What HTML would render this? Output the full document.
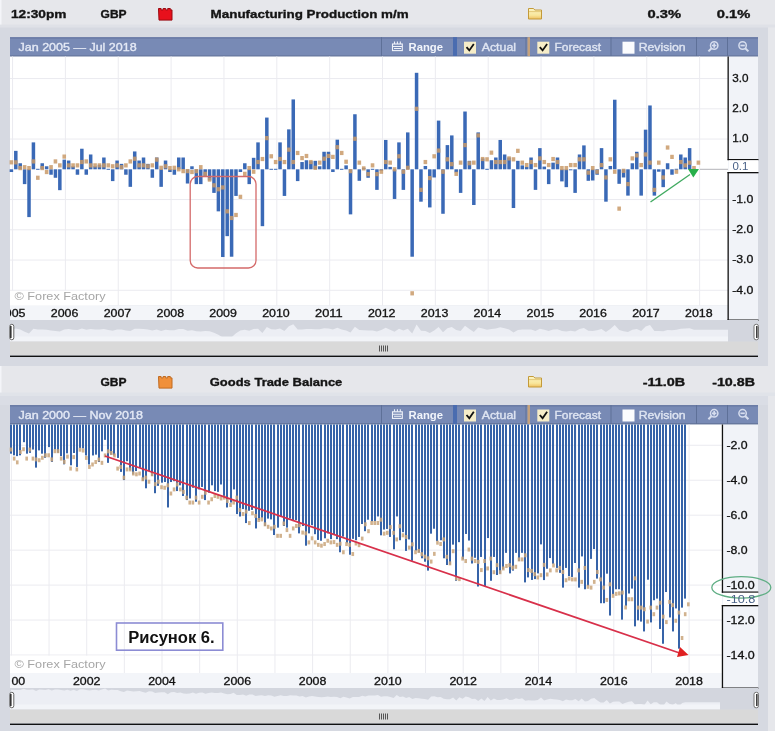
<!DOCTYPE html>
<html><head><meta charset="utf-8"><style>html,body{margin:0;padding:0;background:#e6e7eb;overflow:hidden}svg{display:block}#t{position:absolute;left:0;top:0;will-change:transform}</style></head>
<body><svg width="775" height="731" viewBox="0 0 775 731">
<defs><linearGradient id="fold" x1="0" y1="0" x2="0" y2="1"><stop offset="0" stop-color="#fdf6c8"/><stop offset="0.65" stop-color="#f8e69a"/><stop offset="1" stop-color="#f0c060"/></linearGradient></defs>
<rect x="0" y="0" width="775" height="731" fill="#e6e7eb"/>
<rect x="0" y="25.5" width="768" height="340.5" fill="#d6d9e1"/>
<rect x="0" y="393" width="768" height="338" fill="#d6d9e1"/>
<rect x="0" y="392.5" width="775" height="3.5" fill="#e0e3e9"/>
<rect x="0" y="396" width="768" height="9" fill="#dadde5"/>
<rect x="0" y="24.5" width="775" height="3" fill="#dfe1e7"/>
<rect x="0" y="0" width="1.5" height="24.5" fill="#f4f5f9"/>
<rect x="0" y="366" width="1.5" height="26.5" fill="#f4f5f9"/>
<path d="M158.5 8.5 h2.6 v1.4 h2 v-1.4 h2.6 v1.4 h2 v-1.4 h2.6 v1.4 h1.7 v10.2 h-13 z" fill="#e8101c" stroke="#9a0a10" stroke-width="1"/>
<path d="M528.5 19 V8.5 H533.5 L534.8 10 H541.5 V19 Z" fill="url(#fold)" stroke="#c39a3a" stroke-width="1"/>
<rect x="529" y="11.2" width="12" height="0.9" fill="#d9bc62" opacity="0.8"/>
<path d="M158.5 376.5 h2.6 v1.4 h2 v-1.4 h2.6 v1.4 h2 v-1.4 h2.6 v1.4 h1.7 v10.2 h-13 z" fill="#f0903a" stroke="#c06a20" stroke-width="1"/>
<path d="M528.5 387 V376.5 H533.5 L534.8 378 H541.5 V387 Z" fill="url(#fold)" stroke="#c39a3a" stroke-width="1"/>
<rect x="529" y="379.2" width="12" height="0.9" fill="#d9bc62" opacity="0.8"/>
<rect x="10" y="37.2" width="748" height="19.6" fill="#788ab5"/>
<rect x="10" y="37.2" width="748" height="1.6" fill="#6b7ca6"/>
<rect x="10" y="55.5" width="748" height="1.3" fill="#5f6f94"/>
<rect x="381.0" y="37.2" width="1" height="19" fill="#5e7098"/>
<rect x="610.5" y="37.2" width="1" height="19" fill="#5e7098"/>
<rect x="696.0" y="37.2" width="1" height="19" fill="#5e7098"/>
<rect x="727.0" y="37.2" width="1" height="19" fill="#5e7098"/>
<rect x="453" y="37.2" width="4" height="19" fill="#4a6cb0"/>
<rect x="525.5" y="37.2" width="1" height="19" fill="#5e7098"/>
<rect x="527.5" y="37.2" width="2.5" height="19" fill="#c4a27e"/>
<g stroke="#f0f3fa" stroke-width="1.1" fill="none"><rect x="392.5" y="44.0" width="9.8" height="6.6"/><path d="M392.5 46.5 h9.8 M394.5 41.400000000000006 v2.5 M397.4 41.400000000000006 v2.5 M400.3 41.400000000000006 v2.5 M394 48.5 h7"/></g>
<rect x="464" y="41.7" width="12" height="12" fill="#f6edc8"/>
<path d="M466.5 47.2 l2.8 3.2 l4.5 -6.5" stroke="#111" stroke-width="1.8" fill="none"/>
<rect x="537.3" y="41.7" width="12" height="12" fill="#f6edc8"/>
<path d="M539.8 47.2 l2.8 3.2 l4.5 -6.5" stroke="#111" stroke-width="1.8" fill="none"/>
<rect x="622.5" y="41.7" width="12" height="12" fill="#fbfcfe"/>
<g stroke="#d6ddee" stroke-width="1.5" fill="none"><circle cx="714.2" cy="45.5" r="3.7"/><path d="M711.6 48.2 l-3.2 3.2" stroke-width="2"/><path d="M712 45.5 h4.4 M714.2 43.300000000000004 v4.4" stroke-width="1.7"/></g>
<g stroke="#d6ddee" stroke-width="1.5" fill="none"><circle cx="742.6" cy="45.5" r="3.7"/><path d="M745.2 48.2 l3.2 3.2" stroke-width="2"/><path d="M740.4 45.5 h4.4" stroke-width="1.7"/></g>
<rect x="10" y="405" width="748" height="19.6" fill="#788ab5"/>
<rect x="10" y="405" width="748" height="1.6" fill="#6b7ca6"/>
<rect x="10" y="423.3" width="748" height="1.3" fill="#5f6f94"/>
<rect x="381.0" y="405" width="1" height="19" fill="#5e7098"/>
<rect x="610.5" y="405" width="1" height="19" fill="#5e7098"/>
<rect x="696.0" y="405" width="1" height="19" fill="#5e7098"/>
<rect x="727.0" y="405" width="1" height="19" fill="#5e7098"/>
<rect x="453" y="405" width="4" height="19" fill="#4a6cb0"/>
<rect x="525.5" y="405" width="1" height="19" fill="#5e7098"/>
<rect x="527.5" y="405" width="2.5" height="19" fill="#c4a27e"/>
<g stroke="#f0f3fa" stroke-width="1.1" fill="none"><rect x="392.5" y="411.8" width="9.8" height="6.6"/><path d="M392.5 414.3 h9.8 M394.5 409.2 v2.5 M397.4 409.2 v2.5 M400.3 409.2 v2.5 M394 416.3 h7"/></g>
<rect x="464" y="409.5" width="12" height="12" fill="#f6edc8"/>
<path d="M466.5 415 l2.8 3.2 l4.5 -6.5" stroke="#111" stroke-width="1.8" fill="none"/>
<rect x="537.3" y="409.5" width="12" height="12" fill="#f6edc8"/>
<path d="M539.8 415 l2.8 3.2 l4.5 -6.5" stroke="#111" stroke-width="1.8" fill="none"/>
<rect x="622.5" y="409.5" width="12" height="12" fill="#fbfcfe"/>
<g stroke="#d6ddee" stroke-width="1.5" fill="none"><circle cx="714.2" cy="413.3" r="3.7"/><path d="M711.6 416 l-3.2 3.2" stroke-width="2"/><path d="M712 413.3 h4.4 M714.2 411.1 v4.4" stroke-width="1.7"/></g>
<g stroke="#d6ddee" stroke-width="1.5" fill="none"><circle cx="742.6" cy="413.3" r="3.7"/><path d="M745.2 416 l3.2 3.2" stroke-width="2"/><path d="M740.4 413.3 h4.4" stroke-width="1.7"/></g>
<rect x="10" y="56.5" width="718" height="249.0" fill="#ffffff"/>
<rect x="10" y="305.5" width="718" height="14.5" fill="#f3f5f9"/>
<rect x="728" y="56.5" width="30" height="263.5" fill="#f1f3f8"/>
<rect x="10" y="78.05000000000001" width="718" height="1" fill="#ebebf0"/>
<rect x="10" y="108.30000000000001" width="718" height="1" fill="#ebebf0"/>
<rect x="10" y="138.55" width="718" height="1" fill="#ebebf0"/>
<rect x="10" y="199.05" width="718" height="1" fill="#ebebf0"/>
<rect x="10" y="229.3" width="718" height="1" fill="#ebebf0"/>
<rect x="10" y="259.55" width="718" height="1" fill="#ebebf0"/>
<rect x="10" y="289.8" width="718" height="1" fill="#ebebf0"/>
<rect x="12.05" y="56.5" width="1" height="249.0" fill="#ebebf0"/>
<rect x="64.9" y="56.5" width="1" height="249.0" fill="#ebebf0"/>
<rect x="117.75" y="56.5" width="1" height="249.0" fill="#ebebf0"/>
<rect x="170.60000000000002" y="56.5" width="1" height="249.0" fill="#ebebf0"/>
<rect x="223.45000000000002" y="56.5" width="1" height="249.0" fill="#ebebf0"/>
<rect x="276.3" y="56.5" width="1" height="249.0" fill="#ebebf0"/>
<rect x="329.15000000000003" y="56.5" width="1" height="249.0" fill="#ebebf0"/>
<rect x="382.0" y="56.5" width="1" height="249.0" fill="#ebebf0"/>
<rect x="434.85" y="56.5" width="1" height="249.0" fill="#ebebf0"/>
<rect x="487.70000000000005" y="56.5" width="1" height="249.0" fill="#ebebf0"/>
<rect x="540.55" y="56.5" width="1" height="249.0" fill="#ebebf0"/>
<rect x="593.4" y="56.5" width="1" height="249.0" fill="#ebebf0"/>
<rect x="646.25" y="56.5" width="1" height="249.0" fill="#ebebf0"/>
<rect x="699.1" y="56.5" width="1" height="249.0" fill="#ebebf0"/>
<rect x="10" y="290.8" width="98" height="14.7" fill="#ffffff"/>
<rect x="700" y="168.8" width="28" height="1" fill="#b4b4b8"/>
<rect x="9.65" y="169.30" width="3.5" height="2.72" fill="#3a69b6"/>
<rect x="9.60" y="160.24" width="3.6" height="4.2" fill="#c99a68" opacity="0.85"/>
<rect x="14.05" y="150.85" width="3.5" height="18.45" fill="#3a69b6"/>
<rect x="14.00" y="160.24" width="3.6" height="4.2" fill="#c99a68" opacity="0.85"/>
<rect x="18.46" y="163.25" width="3.5" height="6.05" fill="#3a69b6"/>
<rect x="18.41" y="165.99" width="3.6" height="4.2" fill="#c99a68" opacity="0.85"/>
<rect x="22.86" y="169.30" width="3.5" height="14.82" fill="#3a69b6"/>
<rect x="22.81" y="165.08" width="3.6" height="4.2" fill="#c99a68" opacity="0.85"/>
<rect x="27.27" y="169.30" width="3.5" height="47.80" fill="#3a69b6"/>
<rect x="27.22" y="165.99" width="3.6" height="4.2" fill="#c99a68" opacity="0.85"/>
<rect x="31.67" y="142.38" width="3.5" height="26.92" fill="#3a69b6"/>
<rect x="31.62" y="159.34" width="3.6" height="4.2" fill="#c99a68" opacity="0.85"/>
<rect x="36.07" y="168.80" width="3.5" height="1" fill="#3a69b6"/>
<rect x="36.02" y="175.67" width="3.6" height="4.2" fill="#c99a68" opacity="0.85"/>
<rect x="40.48" y="163.25" width="3.5" height="6.05" fill="#3a69b6"/>
<rect x="40.43" y="165.99" width="3.6" height="4.2" fill="#c99a68" opacity="0.85"/>
<rect x="44.88" y="166.28" width="3.5" height="3.03" fill="#3a69b6"/>
<rect x="44.83" y="169.92" width="3.6" height="4.2" fill="#c99a68" opacity="0.85"/>
<rect x="49.29" y="169.30" width="3.5" height="5.44" fill="#3a69b6"/>
<rect x="49.24" y="165.08" width="3.6" height="4.2" fill="#c99a68" opacity="0.85"/>
<rect x="53.69" y="169.30" width="3.5" height="8.47" fill="#3a69b6"/>
<rect x="53.64" y="159.34" width="3.6" height="4.2" fill="#c99a68" opacity="0.85"/>
<rect x="58.09" y="169.30" width="3.5" height="20.87" fill="#3a69b6"/>
<rect x="58.04" y="163.27" width="3.6" height="4.2" fill="#c99a68" opacity="0.85"/>
<rect x="62.50" y="159.62" width="3.5" height="9.68" fill="#3a69b6"/>
<rect x="62.45" y="154.50" width="3.6" height="4.2" fill="#c99a68" opacity="0.85"/>
<rect x="66.90" y="160.53" width="3.5" height="8.77" fill="#3a69b6"/>
<rect x="66.85" y="163.27" width="3.6" height="4.2" fill="#c99a68" opacity="0.85"/>
<rect x="71.31" y="166.28" width="3.5" height="3.03" fill="#3a69b6"/>
<rect x="71.26" y="163.27" width="3.6" height="4.2" fill="#c99a68" opacity="0.85"/>
<rect x="75.71" y="169.30" width="3.5" height="5.44" fill="#3a69b6"/>
<rect x="75.66" y="163.27" width="3.6" height="4.2" fill="#c99a68" opacity="0.85"/>
<rect x="80.11" y="148.73" width="3.5" height="20.57" fill="#3a69b6"/>
<rect x="80.06" y="159.94" width="3.6" height="4.2" fill="#c99a68" opacity="0.85"/>
<rect x="84.52" y="169.30" width="3.5" height="5.44" fill="#3a69b6"/>
<rect x="84.47" y="159.34" width="3.6" height="4.2" fill="#c99a68" opacity="0.85"/>
<rect x="88.92" y="154.48" width="3.5" height="14.82" fill="#3a69b6"/>
<rect x="88.87" y="163.27" width="3.6" height="4.2" fill="#c99a68" opacity="0.85"/>
<rect x="93.33" y="166.28" width="3.5" height="3.03" fill="#3a69b6"/>
<rect x="93.28" y="163.27" width="3.6" height="4.2" fill="#c99a68" opacity="0.85"/>
<rect x="97.73" y="164.76" width="3.5" height="4.54" fill="#3a69b6"/>
<rect x="97.68" y="163.27" width="3.6" height="4.2" fill="#c99a68" opacity="0.85"/>
<rect x="102.13" y="157.50" width="3.5" height="11.80" fill="#3a69b6"/>
<rect x="102.08" y="163.27" width="3.6" height="4.2" fill="#c99a68" opacity="0.85"/>
<rect x="106.54" y="168.80" width="3.5" height="1" fill="#3a69b6"/>
<rect x="106.49" y="163.27" width="3.6" height="4.2" fill="#c99a68" opacity="0.85"/>
<rect x="110.94" y="169.30" width="3.5" height="11.80" fill="#3a69b6"/>
<rect x="110.89" y="164.18" width="3.6" height="4.2" fill="#c99a68" opacity="0.85"/>
<rect x="115.35" y="160.53" width="3.5" height="8.77" fill="#3a69b6"/>
<rect x="115.30" y="163.27" width="3.6" height="4.2" fill="#c99a68" opacity="0.85"/>
<rect x="119.75" y="163.86" width="3.5" height="5.44" fill="#3a69b6"/>
<rect x="119.70" y="165.08" width="3.6" height="4.2" fill="#c99a68" opacity="0.85"/>
<rect x="124.15" y="169.30" width="3.5" height="5.44" fill="#3a69b6"/>
<rect x="124.10" y="163.27" width="3.6" height="4.2" fill="#c99a68" opacity="0.85"/>
<rect x="128.56" y="169.30" width="3.5" height="17.54" fill="#3a69b6"/>
<rect x="128.51" y="159.34" width="3.6" height="4.2" fill="#c99a68" opacity="0.85"/>
<rect x="132.96" y="151.45" width="3.5" height="17.85" fill="#3a69b6"/>
<rect x="132.91" y="156.61" width="3.6" height="4.2" fill="#c99a68" opacity="0.85"/>
<rect x="137.37" y="160.53" width="3.5" height="8.77" fill="#3a69b6"/>
<rect x="137.32" y="163.27" width="3.6" height="4.2" fill="#c99a68" opacity="0.85"/>
<rect x="141.77" y="157.50" width="3.5" height="11.80" fill="#3a69b6"/>
<rect x="141.72" y="163.27" width="3.6" height="4.2" fill="#c99a68" opacity="0.85"/>
<rect x="146.17" y="163.86" width="3.5" height="5.44" fill="#3a69b6"/>
<rect x="146.12" y="164.18" width="3.6" height="4.2" fill="#c99a68" opacity="0.85"/>
<rect x="150.58" y="169.30" width="3.5" height="8.47" fill="#3a69b6"/>
<rect x="150.53" y="163.27" width="3.6" height="4.2" fill="#c99a68" opacity="0.85"/>
<rect x="154.98" y="157.50" width="3.5" height="11.80" fill="#3a69b6"/>
<rect x="154.93" y="157.52" width="3.6" height="4.2" fill="#c99a68" opacity="0.85"/>
<rect x="159.39" y="169.30" width="3.5" height="17.54" fill="#3a69b6"/>
<rect x="159.34" y="165.69" width="3.6" height="4.2" fill="#c99a68" opacity="0.85"/>
<rect x="163.79" y="160.53" width="3.5" height="8.77" fill="#3a69b6"/>
<rect x="163.74" y="164.18" width="3.6" height="4.2" fill="#c99a68" opacity="0.85"/>
<rect x="168.19" y="169.30" width="3.5" height="2.72" fill="#3a69b6"/>
<rect x="168.14" y="165.99" width="3.6" height="4.2" fill="#c99a68" opacity="0.85"/>
<rect x="172.60" y="169.30" width="3.5" height="5.44" fill="#3a69b6"/>
<rect x="172.55" y="165.69" width="3.6" height="4.2" fill="#c99a68" opacity="0.85"/>
<rect x="177.00" y="157.50" width="3.5" height="11.80" fill="#3a69b6"/>
<rect x="176.95" y="167.20" width="3.6" height="4.2" fill="#c99a68" opacity="0.85"/>
<rect x="181.41" y="157.50" width="3.5" height="11.80" fill="#3a69b6"/>
<rect x="181.36" y="169.02" width="3.6" height="4.2" fill="#c99a68" opacity="0.85"/>
<rect x="185.81" y="169.30" width="3.5" height="14.22" fill="#3a69b6"/>
<rect x="185.76" y="169.02" width="3.6" height="4.2" fill="#c99a68" opacity="0.85"/>
<rect x="190.21" y="166.28" width="3.5" height="3.03" fill="#3a69b6"/>
<rect x="190.16" y="169.92" width="3.6" height="4.2" fill="#c99a68" opacity="0.85"/>
<rect x="194.62" y="169.30" width="3.5" height="14.82" fill="#3a69b6"/>
<rect x="194.57" y="169.02" width="3.6" height="4.2" fill="#c99a68" opacity="0.85"/>
<rect x="199.02" y="169.30" width="3.5" height="14.82" fill="#3a69b6"/>
<rect x="198.97" y="165.08" width="3.6" height="4.2" fill="#c99a68" opacity="0.85"/>
<rect x="203.43" y="169.30" width="3.5" height="6.66" fill="#3a69b6"/>
<rect x="203.38" y="171.74" width="3.6" height="4.2" fill="#c99a68" opacity="0.85"/>
<rect x="207.83" y="169.30" width="3.5" height="11.19" fill="#3a69b6"/>
<rect x="207.78" y="177.49" width="3.6" height="4.2" fill="#c99a68" opacity="0.85"/>
<rect x="212.23" y="169.30" width="3.5" height="23.59" fill="#3a69b6"/>
<rect x="212.18" y="183.23" width="3.6" height="4.2" fill="#c99a68" opacity="0.85"/>
<rect x="216.64" y="169.30" width="3.5" height="42.05" fill="#3a69b6"/>
<rect x="216.59" y="187.17" width="3.6" height="4.2" fill="#c99a68" opacity="0.85"/>
<rect x="221.04" y="169.30" width="3.5" height="87.72" fill="#3a69b6"/>
<rect x="220.99" y="185.35" width="3.6" height="4.2" fill="#c99a68" opacity="0.85"/>
<rect x="225.45" y="169.30" width="3.5" height="66.85" fill="#3a69b6"/>
<rect x="225.40" y="209.25" width="3.6" height="4.2" fill="#c99a68" opacity="0.85"/>
<rect x="229.85" y="169.30" width="3.5" height="87.42" fill="#3a69b6"/>
<rect x="229.80" y="215.90" width="3.6" height="4.2" fill="#c99a68" opacity="0.85"/>
<rect x="234.25" y="169.30" width="3.5" height="26.62" fill="#3a69b6"/>
<rect x="234.20" y="212.88" width="3.6" height="4.2" fill="#c99a68" opacity="0.85"/>
<rect x="238.66" y="169.30" width="3.5" height="2.72" fill="#3a69b6"/>
<rect x="238.61" y="194.73" width="3.6" height="4.2" fill="#c99a68" opacity="0.85"/>
<rect x="243.06" y="163.25" width="3.5" height="6.05" fill="#3a69b6"/>
<rect x="243.01" y="171.74" width="3.6" height="4.2" fill="#c99a68" opacity="0.85"/>
<rect x="247.47" y="169.30" width="3.5" height="14.82" fill="#3a69b6"/>
<rect x="247.42" y="165.99" width="3.6" height="4.2" fill="#c99a68" opacity="0.85"/>
<rect x="251.87" y="157.81" width="3.5" height="11.50" fill="#3a69b6"/>
<rect x="251.82" y="169.62" width="3.6" height="4.2" fill="#c99a68" opacity="0.85"/>
<rect x="256.27" y="142.38" width="3.5" height="26.92" fill="#3a69b6"/>
<rect x="256.22" y="159.94" width="3.6" height="4.2" fill="#c99a68" opacity="0.85"/>
<rect x="260.68" y="169.30" width="3.5" height="56.87" fill="#3a69b6"/>
<rect x="260.63" y="156.92" width="3.6" height="4.2" fill="#c99a68" opacity="0.85"/>
<rect x="265.08" y="117.57" width="3.5" height="51.73" fill="#3a69b6"/>
<rect x="265.03" y="136.04" width="3.6" height="4.2" fill="#c99a68" opacity="0.85"/>
<rect x="269.49" y="168.80" width="3.5" height="1" fill="#3a69b6"/>
<rect x="269.44" y="154.19" width="3.6" height="4.2" fill="#c99a68" opacity="0.85"/>
<rect x="273.89" y="168.80" width="3.5" height="1" fill="#3a69b6"/>
<rect x="273.84" y="159.94" width="3.6" height="4.2" fill="#c99a68" opacity="0.85"/>
<rect x="278.29" y="142.38" width="3.5" height="26.92" fill="#3a69b6"/>
<rect x="278.24" y="156.92" width="3.6" height="4.2" fill="#c99a68" opacity="0.85"/>
<rect x="282.70" y="169.30" width="3.5" height="26.62" fill="#3a69b6"/>
<rect x="282.65" y="159.94" width="3.6" height="4.2" fill="#c99a68" opacity="0.85"/>
<rect x="287.10" y="129.37" width="3.5" height="39.93" fill="#3a69b6"/>
<rect x="287.05" y="147.54" width="3.6" height="4.2" fill="#c99a68" opacity="0.85"/>
<rect x="291.51" y="99.42" width="3.5" height="69.88" fill="#3a69b6"/>
<rect x="291.46" y="159.94" width="3.6" height="4.2" fill="#c99a68" opacity="0.85"/>
<rect x="295.91" y="169.30" width="3.5" height="11.80" fill="#3a69b6"/>
<rect x="295.86" y="150.87" width="3.6" height="4.2" fill="#c99a68" opacity="0.85"/>
<rect x="300.31" y="162.04" width="3.5" height="7.26" fill="#3a69b6"/>
<rect x="300.26" y="156.01" width="3.6" height="4.2" fill="#c99a68" opacity="0.85"/>
<rect x="304.72" y="160.23" width="3.5" height="9.07" fill="#3a69b6"/>
<rect x="304.67" y="153.89" width="3.6" height="4.2" fill="#c99a68" opacity="0.85"/>
<rect x="309.12" y="161.13" width="3.5" height="8.17" fill="#3a69b6"/>
<rect x="309.07" y="159.94" width="3.6" height="4.2" fill="#c99a68" opacity="0.85"/>
<rect x="313.53" y="160.83" width="3.5" height="8.47" fill="#3a69b6"/>
<rect x="313.48" y="165.69" width="3.6" height="4.2" fill="#c99a68" opacity="0.85"/>
<rect x="317.93" y="166.28" width="3.5" height="3.03" fill="#3a69b6"/>
<rect x="317.88" y="160.55" width="3.6" height="4.2" fill="#c99a68" opacity="0.85"/>
<rect x="322.33" y="151.76" width="3.5" height="17.54" fill="#3a69b6"/>
<rect x="322.28" y="156.61" width="3.6" height="4.2" fill="#c99a68" opacity="0.85"/>
<rect x="326.74" y="151.76" width="3.5" height="17.54" fill="#3a69b6"/>
<rect x="326.69" y="153.89" width="3.6" height="4.2" fill="#c99a68" opacity="0.85"/>
<rect x="331.14" y="169.30" width="3.5" height="2.72" fill="#3a69b6"/>
<rect x="331.09" y="154.80" width="3.6" height="4.2" fill="#c99a68" opacity="0.85"/>
<rect x="335.55" y="139.66" width="3.5" height="29.65" fill="#3a69b6"/>
<rect x="335.50" y="145.12" width="3.6" height="4.2" fill="#c99a68" opacity="0.85"/>
<rect x="339.95" y="168.80" width="3.5" height="1" fill="#3a69b6"/>
<rect x="339.90" y="150.87" width="3.6" height="4.2" fill="#c99a68" opacity="0.85"/>
<rect x="344.35" y="165.37" width="3.5" height="3.93" fill="#3a69b6"/>
<rect x="344.30" y="159.64" width="3.6" height="4.2" fill="#c99a68" opacity="0.85"/>
<rect x="348.76" y="169.30" width="3.5" height="45.07" fill="#3a69b6"/>
<rect x="348.71" y="169.02" width="3.6" height="4.2" fill="#c99a68" opacity="0.85"/>
<rect x="353.16" y="114.25" width="3.5" height="55.06" fill="#3a69b6"/>
<rect x="353.11" y="136.65" width="3.6" height="4.2" fill="#c99a68" opacity="0.85"/>
<rect x="357.57" y="169.30" width="3.5" height="11.50" fill="#3a69b6"/>
<rect x="357.52" y="160.55" width="3.6" height="4.2" fill="#c99a68" opacity="0.85"/>
<rect x="361.97" y="167.79" width="3.5" height="1.51" fill="#3a69b6"/>
<rect x="361.92" y="166.29" width="3.6" height="4.2" fill="#c99a68" opacity="0.85"/>
<rect x="366.37" y="169.30" width="3.5" height="8.47" fill="#3a69b6"/>
<rect x="366.32" y="172.04" width="3.6" height="4.2" fill="#c99a68" opacity="0.85"/>
<rect x="370.78" y="168.80" width="3.5" height="1" fill="#3a69b6"/>
<rect x="370.73" y="163.27" width="3.6" height="4.2" fill="#c99a68" opacity="0.85"/>
<rect x="375.18" y="169.30" width="3.5" height="20.57" fill="#3a69b6"/>
<rect x="375.13" y="172.04" width="3.6" height="4.2" fill="#c99a68" opacity="0.85"/>
<rect x="379.59" y="169.30" width="3.5" height="1.51" fill="#3a69b6"/>
<rect x="379.54" y="169.62" width="3.6" height="4.2" fill="#c99a68" opacity="0.85"/>
<rect x="383.99" y="139.96" width="3.5" height="29.34" fill="#3a69b6"/>
<rect x="383.94" y="159.94" width="3.6" height="4.2" fill="#c99a68" opacity="0.85"/>
<rect x="388.39" y="166.88" width="3.5" height="2.42" fill="#3a69b6"/>
<rect x="388.34" y="160.55" width="3.6" height="4.2" fill="#c99a68" opacity="0.85"/>
<rect x="392.80" y="169.30" width="3.5" height="29.65" fill="#3a69b6"/>
<rect x="392.75" y="167.20" width="3.6" height="4.2" fill="#c99a68" opacity="0.85"/>
<rect x="397.20" y="142.38" width="3.5" height="26.92" fill="#3a69b6"/>
<rect x="397.15" y="154.19" width="3.6" height="4.2" fill="#c99a68" opacity="0.85"/>
<rect x="401.61" y="169.30" width="3.5" height="20.57" fill="#3a69b6"/>
<rect x="401.56" y="169.62" width="3.6" height="4.2" fill="#c99a68" opacity="0.85"/>
<rect x="406.01" y="132.40" width="3.5" height="36.91" fill="#3a69b6"/>
<rect x="405.96" y="165.69" width="3.6" height="4.2" fill="#c99a68" opacity="0.85"/>
<rect x="410.41" y="169.30" width="3.5" height="87.42" fill="#3a69b6"/>
<rect x="410.36" y="291.22" width="3.6" height="4.2" fill="#c99a68" opacity="0.85"/>
<rect x="414.82" y="72.80" width="3.5" height="96.50" fill="#3a69b6"/>
<rect x="414.77" y="106.70" width="3.6" height="4.2" fill="#c99a68" opacity="0.85"/>
<rect x="419.22" y="169.30" width="3.5" height="32.37" fill="#3a69b6"/>
<rect x="419.17" y="187.77" width="3.6" height="4.2" fill="#c99a68" opacity="0.85"/>
<rect x="423.63" y="165.97" width="3.5" height="3.33" fill="#3a69b6"/>
<rect x="423.58" y="159.94" width="3.6" height="4.2" fill="#c99a68" opacity="0.85"/>
<rect x="428.03" y="169.30" width="3.5" height="38.12" fill="#3a69b6"/>
<rect x="427.98" y="175.97" width="3.6" height="4.2" fill="#c99a68" opacity="0.85"/>
<rect x="432.43" y="169.30" width="3.5" height="8.17" fill="#3a69b6"/>
<rect x="432.38" y="154.19" width="3.6" height="4.2" fill="#c99a68" opacity="0.85"/>
<rect x="436.84" y="120.60" width="3.5" height="48.70" fill="#3a69b6"/>
<rect x="436.79" y="148.45" width="3.6" height="4.2" fill="#c99a68" opacity="0.85"/>
<rect x="441.24" y="169.30" width="3.5" height="44.47" fill="#3a69b6"/>
<rect x="441.19" y="169.62" width="3.6" height="4.2" fill="#c99a68" opacity="0.85"/>
<rect x="445.65" y="145.10" width="3.5" height="24.20" fill="#3a69b6"/>
<rect x="445.60" y="157.22" width="3.6" height="4.2" fill="#c99a68" opacity="0.85"/>
<rect x="450.05" y="135.42" width="3.5" height="33.88" fill="#3a69b6"/>
<rect x="450.00" y="162.06" width="3.6" height="4.2" fill="#c99a68" opacity="0.85"/>
<rect x="454.45" y="169.30" width="3.5" height="3.03" fill="#3a69b6"/>
<rect x="454.40" y="171.74" width="3.6" height="4.2" fill="#c99a68" opacity="0.85"/>
<rect x="458.86" y="169.30" width="3.5" height="23.59" fill="#3a69b6"/>
<rect x="458.81" y="160.55" width="3.6" height="4.2" fill="#c99a68" opacity="0.85"/>
<rect x="463.26" y="111.52" width="3.5" height="57.78" fill="#3a69b6"/>
<rect x="463.21" y="143.00" width="3.6" height="4.2" fill="#c99a68" opacity="0.85"/>
<rect x="467.67" y="160.83" width="3.5" height="8.47" fill="#3a69b6"/>
<rect x="467.62" y="161.15" width="3.6" height="4.2" fill="#c99a68" opacity="0.85"/>
<rect x="472.07" y="169.30" width="3.5" height="35.69" fill="#3a69b6"/>
<rect x="472.02" y="160.55" width="3.6" height="4.2" fill="#c99a68" opacity="0.85"/>
<rect x="476.47" y="132.40" width="3.5" height="36.91" fill="#3a69b6"/>
<rect x="476.42" y="133.32" width="3.6" height="4.2" fill="#c99a68" opacity="0.85"/>
<rect x="480.88" y="158.41" width="3.5" height="10.89" fill="#3a69b6"/>
<rect x="480.83" y="156.92" width="3.6" height="4.2" fill="#c99a68" opacity="0.85"/>
<rect x="485.28" y="168.80" width="3.5" height="1" fill="#3a69b6"/>
<rect x="485.23" y="157.22" width="3.6" height="4.2" fill="#c99a68" opacity="0.85"/>
<rect x="489.69" y="160.23" width="3.5" height="9.07" fill="#3a69b6"/>
<rect x="489.64" y="150.56" width="3.6" height="4.2" fill="#c99a68" opacity="0.85"/>
<rect x="494.09" y="157.50" width="3.5" height="11.80" fill="#3a69b6"/>
<rect x="494.04" y="159.94" width="3.6" height="4.2" fill="#c99a68" opacity="0.85"/>
<rect x="498.49" y="139.96" width="3.5" height="29.34" fill="#3a69b6"/>
<rect x="498.44" y="159.94" width="3.6" height="4.2" fill="#c99a68" opacity="0.85"/>
<rect x="502.90" y="154.48" width="3.5" height="14.82" fill="#3a69b6"/>
<rect x="502.85" y="159.94" width="3.6" height="4.2" fill="#c99a68" opacity="0.85"/>
<rect x="507.30" y="157.50" width="3.5" height="11.80" fill="#3a69b6"/>
<rect x="507.25" y="156.31" width="3.6" height="4.2" fill="#c99a68" opacity="0.85"/>
<rect x="511.71" y="169.30" width="3.5" height="38.72" fill="#3a69b6"/>
<rect x="511.66" y="157.22" width="3.6" height="4.2" fill="#c99a68" opacity="0.85"/>
<rect x="516.11" y="160.83" width="3.5" height="8.47" fill="#3a69b6"/>
<rect x="516.06" y="148.75" width="3.6" height="4.2" fill="#c99a68" opacity="0.85"/>
<rect x="520.51" y="165.37" width="3.5" height="3.93" fill="#3a69b6"/>
<rect x="520.46" y="160.55" width="3.6" height="4.2" fill="#c99a68" opacity="0.85"/>
<rect x="524.92" y="166.88" width="3.5" height="2.42" fill="#3a69b6"/>
<rect x="524.87" y="162.97" width="3.6" height="4.2" fill="#c99a68" opacity="0.85"/>
<rect x="529.32" y="157.50" width="3.5" height="11.80" fill="#3a69b6"/>
<rect x="529.27" y="159.94" width="3.6" height="4.2" fill="#c99a68" opacity="0.85"/>
<rect x="533.73" y="169.30" width="3.5" height="20.57" fill="#3a69b6"/>
<rect x="533.68" y="162.97" width="3.6" height="4.2" fill="#c99a68" opacity="0.85"/>
<rect x="538.13" y="148.12" width="3.5" height="21.18" fill="#3a69b6"/>
<rect x="538.08" y="156.31" width="3.6" height="4.2" fill="#c99a68" opacity="0.85"/>
<rect x="542.53" y="166.58" width="3.5" height="2.72" fill="#3a69b6"/>
<rect x="542.48" y="159.94" width="3.6" height="4.2" fill="#c99a68" opacity="0.85"/>
<rect x="546.94" y="169.30" width="3.5" height="14.82" fill="#3a69b6"/>
<rect x="546.89" y="162.97" width="3.6" height="4.2" fill="#c99a68" opacity="0.85"/>
<rect x="551.34" y="162.65" width="3.5" height="6.66" fill="#3a69b6"/>
<rect x="551.29" y="156.92" width="3.6" height="4.2" fill="#c99a68" opacity="0.85"/>
<rect x="555.75" y="157.50" width="3.5" height="11.80" fill="#3a69b6"/>
<rect x="555.70" y="159.94" width="3.6" height="4.2" fill="#c99a68" opacity="0.85"/>
<rect x="560.15" y="169.30" width="3.5" height="12.10" fill="#3a69b6"/>
<rect x="560.10" y="165.99" width="3.6" height="4.2" fill="#c99a68" opacity="0.85"/>
<rect x="564.55" y="169.30" width="3.5" height="17.85" fill="#3a69b6"/>
<rect x="564.50" y="165.99" width="3.6" height="4.2" fill="#c99a68" opacity="0.85"/>
<rect x="568.96" y="169.30" width="3.5" height="1.00" fill="#3a69b6"/>
<rect x="568.91" y="162.97" width="3.6" height="4.2" fill="#c99a68" opacity="0.85"/>
<rect x="573.36" y="169.30" width="3.5" height="23.59" fill="#3a69b6"/>
<rect x="573.31" y="162.97" width="3.6" height="4.2" fill="#c99a68" opacity="0.85"/>
<rect x="577.77" y="154.48" width="3.5" height="14.82" fill="#3a69b6"/>
<rect x="577.72" y="157.22" width="3.6" height="4.2" fill="#c99a68" opacity="0.85"/>
<rect x="582.17" y="145.40" width="3.5" height="23.90" fill="#3a69b6"/>
<rect x="582.12" y="157.22" width="3.6" height="4.2" fill="#c99a68" opacity="0.85"/>
<rect x="586.57" y="169.30" width="3.5" height="11.50" fill="#3a69b6"/>
<rect x="586.52" y="170.53" width="3.6" height="4.2" fill="#c99a68" opacity="0.85"/>
<rect x="590.98" y="169.30" width="3.5" height="11.19" fill="#3a69b6"/>
<rect x="590.93" y="165.99" width="3.6" height="4.2" fill="#c99a68" opacity="0.85"/>
<rect x="595.38" y="169.30" width="3.5" height="5.44" fill="#3a69b6"/>
<rect x="595.33" y="169.62" width="3.6" height="4.2" fill="#c99a68" opacity="0.85"/>
<rect x="599.79" y="148.12" width="3.5" height="21.18" fill="#3a69b6"/>
<rect x="599.74" y="162.97" width="3.6" height="4.2" fill="#c99a68" opacity="0.85"/>
<rect x="604.19" y="169.30" width="3.5" height="32.37" fill="#3a69b6"/>
<rect x="604.14" y="175.37" width="3.6" height="4.2" fill="#c99a68" opacity="0.85"/>
<rect x="608.59" y="165.97" width="3.5" height="3.33" fill="#3a69b6"/>
<rect x="608.54" y="157.22" width="3.6" height="4.2" fill="#c99a68" opacity="0.85"/>
<rect x="613.00" y="99.73" width="3.5" height="69.57" fill="#3a69b6"/>
<rect x="612.95" y="169.62" width="3.6" height="4.2" fill="#c99a68" opacity="0.85"/>
<rect x="617.40" y="169.30" width="3.5" height="14.52" fill="#3a69b6"/>
<rect x="617.35" y="206.53" width="3.6" height="4.2" fill="#c99a68" opacity="0.85"/>
<rect x="621.81" y="169.30" width="3.5" height="8.17" fill="#3a69b6"/>
<rect x="621.76" y="168.71" width="3.6" height="4.2" fill="#c99a68" opacity="0.85"/>
<rect x="626.21" y="169.30" width="3.5" height="26.32" fill="#3a69b6"/>
<rect x="626.16" y="182.02" width="3.6" height="4.2" fill="#c99a68" opacity="0.85"/>
<rect x="630.61" y="163.25" width="3.5" height="6.05" fill="#3a69b6"/>
<rect x="630.56" y="156.31" width="3.6" height="4.2" fill="#c99a68" opacity="0.85"/>
<rect x="635.02" y="151.76" width="3.5" height="17.54" fill="#3a69b6"/>
<rect x="634.97" y="153.29" width="3.6" height="4.2" fill="#c99a68" opacity="0.85"/>
<rect x="639.42" y="169.30" width="3.5" height="26.32" fill="#3a69b6"/>
<rect x="639.37" y="162.97" width="3.6" height="4.2" fill="#c99a68" opacity="0.85"/>
<rect x="643.83" y="129.67" width="3.5" height="39.63" fill="#3a69b6"/>
<rect x="643.78" y="152.38" width="3.6" height="4.2" fill="#c99a68" opacity="0.85"/>
<rect x="648.23" y="105.47" width="3.5" height="63.83" fill="#3a69b6"/>
<rect x="648.18" y="160.55" width="3.6" height="4.2" fill="#c99a68" opacity="0.85"/>
<rect x="652.63" y="169.30" width="3.5" height="26.32" fill="#3a69b6"/>
<rect x="652.58" y="187.77" width="3.6" height="4.2" fill="#c99a68" opacity="0.85"/>
<rect x="657.04" y="169.30" width="3.5" height="2.42" fill="#3a69b6"/>
<rect x="656.99" y="160.55" width="3.6" height="4.2" fill="#c99a68" opacity="0.85"/>
<rect x="661.44" y="169.30" width="3.5" height="17.85" fill="#3a69b6"/>
<rect x="661.39" y="175.37" width="3.6" height="4.2" fill="#c99a68" opacity="0.85"/>
<rect x="665.85" y="163.25" width="3.5" height="6.05" fill="#3a69b6"/>
<rect x="665.80" y="145.42" width="3.6" height="4.2" fill="#c99a68" opacity="0.85"/>
<rect x="670.25" y="169.30" width="3.5" height="5.44" fill="#3a69b6"/>
<rect x="670.20" y="154.80" width="3.6" height="4.2" fill="#c99a68" opacity="0.85"/>
<rect x="674.65" y="168.80" width="3.5" height="1" fill="#3a69b6"/>
<rect x="674.60" y="169.62" width="3.6" height="4.2" fill="#c99a68" opacity="0.85"/>
<rect x="679.06" y="154.48" width="3.5" height="14.82" fill="#3a69b6"/>
<rect x="679.01" y="159.94" width="3.6" height="4.2" fill="#c99a68" opacity="0.85"/>
<rect x="683.46" y="157.50" width="3.5" height="11.80" fill="#3a69b6"/>
<rect x="683.41" y="163.27" width="3.6" height="4.2" fill="#c99a68" opacity="0.85"/>
<rect x="687.87" y="148.12" width="3.5" height="21.18" fill="#3a69b6"/>
<rect x="687.82" y="160.55" width="3.6" height="4.2" fill="#c99a68" opacity="0.85"/>
<rect x="692.27" y="168.80" width="3.5" height="1" fill="#3a69b6"/>
<rect x="692.22" y="165.99" width="3.6" height="4.2" fill="#c99a68" opacity="0.85"/>
<rect x="696.62" y="160.55" width="3.6" height="4.2" fill="#c99a68" opacity="0.85"/>
<rect x="727.5" y="56.5" width="1.3" height="103" fill="#111"/>
<rect x="727.5" y="172" width="1.3" height="148.5" fill="#111"/>
<rect x="727.5" y="159" width="31" height="1.3" fill="#111"/>
<rect x="727.5" y="172" width="31" height="1.3" fill="#111"/>
<rect x="728.8" y="160.3" width="29.5" height="11.7" fill="#ffffff"/>
<rect x="727.5" y="319.5" width="31" height="1.3" fill="#111"/>
<rect x="0" y="300" width="10" height="25" fill="#d6d9e1"/>
<rect x="10" y="320" width="748" height="22" fill="#d3d6de"/>
<path d="M10 341.5 L11.4 330.0 L15.8 328.5 L20.2 329.5 L24.6 331.8 L29.0 333.5 L33.4 328.7 L37.8 329.5 L42.2 329.5 L46.6 329.8 L51.0 330.5 L55.4 331.1 L59.8 331.6 L64.2 329.5 L68.7 329.1 L73.1 329.7 L77.5 330.0 L81.9 328.6 L86.3 329.8 L90.7 328.9 L95.1 329.5 L99.5 329.4 L103.9 329.0 L108.3 330.0 L112.7 330.8 L117.1 329.4 L121.5 329.5 L125.9 330.6 L130.3 331.1 L134.7 328.8 L139.1 328.8 L143.5 328.9 L147.9 329.5 L152.3 330.4 L156.7 329.5 L161.1 331.0 L165.5 329.7 L169.9 330.2 L174.3 330.3 L178.8 329.0 L183.2 329.1 L187.6 330.8 L192.0 330.2 L196.4 331.3 L200.8 331.5 L205.2 330.9 L209.6 331.3 L214.0 332.7 L218.4 334.8 L222.8 337.6 L227.2 337.6 L231.6 337.3 L236.0 333.3 L240.4 330.5 L244.8 329.8 L249.2 330.8 L253.6 328.9 L258.0 328.7 L262.4 333.1 L266.8 327.0 L271.2 329.2 L275.6 329.6 L280.0 328.4 L284.4 330.9 L288.9 326.2 L293.3 324.2 L297.7 329.6 L302.1 329.5 L306.5 329.1 L310.9 329.1 L315.3 329.2 L319.7 329.3 L324.1 328.3 L328.5 328.4 L332.9 329.4 L337.3 327.8 L341.7 329.5 L346.1 330.4 L350.5 332.5 L354.9 326.7 L359.3 330.0 L363.7 330.2 L368.1 330.6 L372.5 330.5 L376.9 331.6 L381.3 330.0 L385.7 327.7 L390.1 329.8 L394.5 331.8 L399.0 328.8 L403.4 330.5 L407.8 328.8 L412.2 333.6 L416.6 324.4 L421.0 330.8 L425.4 330.9 L429.8 333.0 L434.2 330.5 L438.6 327.1 L443.0 332.2 L447.4 328.3 L451.8 327.1 L456.2 330.1 L460.6 330.9 L465.0 325.8 L469.4 329.0 L473.8 332.0 L478.2 327.6 L482.6 328.6 L487.0 329.7 L491.4 329.1 L495.8 328.5 L500.2 327.3 L504.6 328.2 L509.1 329.5 L513.5 332.6 L517.9 329.9 L522.3 329.5 L526.7 329.6 L531.1 329.4 L535.5 331.0 L539.9 328.7 L544.3 329.7 L548.7 331.0 L553.1 329.5 L557.5 329.2 L561.9 331.0 L566.3 331.6 L570.7 330.7 L575.1 331.6 L579.5 328.9 L583.9 328.1 L588.3 330.7 L592.7 331.1 L597.1 330.3 L601.5 329.0 L605.9 332.1 L610.3 329.1 L614.7 324.9 L619.2 330.1 L623.6 331.3 L628.0 332.0 L632.4 329.7 L636.8 329.0 L641.2 331.1 L645.6 326.4 L650.0 324.9 L654.4 331.0 L658.8 330.9 L663.2 331.3 L667.6 329.9 L672.0 330.3 L676.4 329.8 L680.8 328.7 L685.2 328.5 L689.6 328.2 L694.0 329.7 L728 329.7 L728 341.5 Z" fill="#eceef4"/>
<rect x="10" y="336.5" width="718" height="5" fill="#f2f4f8"/>
<rect x="10" y="341.5" width="748" height="13.5" fill="#d9d9d9"/>
<rect x="10" y="355.6" width="748" height="1.4" fill="#111"/>
<rect x="9.8" y="324.3" width="4" height="15.5" rx="2" fill="#fff" stroke="#666" stroke-width="1"/>
<rect x="10.2" y="326" width="1.3" height="12" fill="#111"/>
<rect x="754.0" y="324.3" width="4.5" height="15.5" rx="2" fill="#fff" stroke="#777" stroke-width="1"/>
<rect x="756.2" y="326" width="1.3" height="12" fill="#111"/>
<rect x="379" y="345.5" width="1" height="6" fill="#555"/>
<rect x="381" y="345.5" width="1" height="6" fill="#555"/>
<rect x="383" y="345.5" width="1" height="6" fill="#555"/>
<rect x="385" y="345.5" width="1" height="6" fill="#555"/>
<rect x="387" y="345.5" width="1" height="6" fill="#555"/>
<rect x="190.2" y="176.5" width="65.8" height="91.5" rx="7.5" ry="7.5" fill="none" stroke="#d46a6a" stroke-width="1.3"/>
<path d="M650.5 202 L690 174.5" stroke="#40aa60" stroke-width="1.4"/>
<path d="M688 169 L699 169 L693.3 177.5 Z" fill="#27b04a"/>
<rect x="10" y="424.5" width="712" height="248.5" fill="#ffffff"/>
<rect x="10" y="673" width="712" height="15" fill="#f3f5f9"/>
<rect x="722" y="424.5" width="36" height="264" fill="#f1f3f8"/>
<rect x="10" y="444.76" width="712" height="1" fill="#ebebf0"/>
<rect x="10" y="479.72" width="712" height="1" fill="#ebebf0"/>
<rect x="10" y="514.6800000000001" width="712" height="1" fill="#ebebf0"/>
<rect x="10" y="549.64" width="712" height="1" fill="#ebebf0"/>
<rect x="10" y="584.6" width="712" height="1" fill="#ebebf0"/>
<rect x="10" y="619.56" width="712" height="1" fill="#ebebf0"/>
<rect x="10" y="654.52" width="712" height="1" fill="#ebebf0"/>
<rect x="10.9" y="424.5" width="1" height="248.5" fill="#ebebf0"/>
<rect x="48.55" y="424.5" width="1" height="248.5" fill="#ebebf0"/>
<rect x="86.2" y="424.5" width="1" height="248.5" fill="#ebebf0"/>
<rect x="123.85" y="424.5" width="1" height="248.5" fill="#ebebf0"/>
<rect x="161.5" y="424.5" width="1" height="248.5" fill="#ebebf0"/>
<rect x="199.15" y="424.5" width="1" height="248.5" fill="#ebebf0"/>
<rect x="236.79999999999998" y="424.5" width="1" height="248.5" fill="#ebebf0"/>
<rect x="274.45" y="424.5" width="1" height="248.5" fill="#ebebf0"/>
<rect x="312.09999999999997" y="424.5" width="1" height="248.5" fill="#ebebf0"/>
<rect x="349.74999999999994" y="424.5" width="1" height="248.5" fill="#ebebf0"/>
<rect x="387.4" y="424.5" width="1" height="248.5" fill="#ebebf0"/>
<rect x="425.04999999999995" y="424.5" width="1" height="248.5" fill="#ebebf0"/>
<rect x="462.69999999999993" y="424.5" width="1" height="248.5" fill="#ebebf0"/>
<rect x="500.34999999999997" y="424.5" width="1" height="248.5" fill="#ebebf0"/>
<rect x="538.0" y="424.5" width="1" height="248.5" fill="#ebebf0"/>
<rect x="575.65" y="424.5" width="1" height="248.5" fill="#ebebf0"/>
<rect x="613.3" y="424.5" width="1" height="248.5" fill="#ebebf0"/>
<rect x="650.9499999999999" y="424.5" width="1" height="248.5" fill="#ebebf0"/>
<rect x="688.5999999999999" y="424.5" width="1" height="248.5" fill="#ebebf0"/>
<rect x="10" y="655.7" width="113" height="17.3" fill="#ffffff"/>
<rect x="10" y="424.5" width="2" height="29.16" fill="#3663a8"/>
<rect x="13" y="424.5" width="2" height="30.80" fill="#3663a8"/>
<rect x="16" y="424.5" width="2" height="31.62" fill="#3663a8"/>
<rect x="19" y="424.5" width="2" height="30.80" fill="#3663a8"/>
<rect x="23" y="424.5" width="2" height="17.67" fill="#3663a8"/>
<rect x="26" y="424.5" width="2" height="29.16" fill="#3663a8"/>
<rect x="29" y="424.5" width="2" height="28.34" fill="#3663a8"/>
<rect x="32" y="424.5" width="2" height="25.06" fill="#3663a8"/>
<rect x="35" y="424.5" width="2" height="43.12" fill="#3663a8"/>
<rect x="38" y="424.5" width="2" height="25.88" fill="#3663a8"/>
<rect x="41" y="424.5" width="2" height="29.16" fill="#3663a8"/>
<rect x="44" y="424.5" width="2" height="33.27" fill="#3663a8"/>
<rect x="48" y="424.5" width="2" height="22.59" fill="#3663a8"/>
<rect x="51" y="424.5" width="2" height="37.37" fill="#3663a8"/>
<rect x="54" y="424.5" width="2" height="25.06" fill="#3663a8"/>
<rect x="57" y="424.5" width="2" height="28.28" fill="#3663a8"/>
<rect x="60" y="424.5" width="2" height="31.62" fill="#3663a8"/>
<rect x="63" y="424.5" width="2" height="39.83" fill="#3663a8"/>
<rect x="66" y="424.5" width="2" height="28.83" fill="#3663a8"/>
<rect x="70" y="424.5" width="2" height="40.80" fill="#3663a8"/>
<rect x="73" y="424.5" width="2" height="28.49" fill="#3663a8"/>
<rect x="76" y="424.5" width="2" height="42.45" fill="#3663a8"/>
<rect x="79" y="424.5" width="2" height="23.56" fill="#3663a8"/>
<rect x="82" y="424.5" width="2" height="23.97" fill="#3663a8"/>
<rect x="85" y="424.5" width="2" height="30.95" fill="#3663a8"/>
<rect x="88" y="424.5" width="2" height="39.98" fill="#3663a8"/>
<rect x="92" y="424.5" width="2" height="30.95" fill="#3663a8"/>
<rect x="95" y="424.5" width="2" height="30.13" fill="#3663a8"/>
<rect x="98" y="424.5" width="2" height="37.52" fill="#3663a8"/>
<rect x="101" y="424.5" width="2" height="26.85" fill="#3663a8"/>
<rect x="104" y="424.5" width="2" height="15.35" fill="#3663a8"/>
<rect x="107" y="424.5" width="2" height="38.34" fill="#3663a8"/>
<rect x="110" y="424.5" width="2" height="30.13" fill="#3663a8"/>
<rect x="113" y="424.5" width="2" height="30.95" fill="#3663a8"/>
<rect x="117" y="424.5" width="2" height="33.41" fill="#3663a8"/>
<rect x="120" y="424.5" width="2" height="47.37" fill="#3663a8"/>
<rect x="123" y="424.5" width="2" height="55.58" fill="#3663a8"/>
<rect x="126" y="424.5" width="2" height="36.70" fill="#3663a8"/>
<rect x="129" y="424.5" width="2" height="45.73" fill="#3663a8"/>
<rect x="132" y="424.5" width="2" height="49.83" fill="#3663a8"/>
<rect x="135" y="424.5" width="2" height="46.55" fill="#3663a8"/>
<rect x="139" y="424.5" width="2" height="43.27" fill="#3663a8"/>
<rect x="142" y="424.5" width="2" height="56.40" fill="#3663a8"/>
<rect x="145" y="424.5" width="2" height="63.79" fill="#3663a8"/>
<rect x="148" y="424.5" width="2" height="46.55" fill="#3663a8"/>
<rect x="151" y="424.5" width="2" height="51.48" fill="#3663a8"/>
<rect x="154" y="424.5" width="2" height="68.72" fill="#3663a8"/>
<rect x="157" y="424.5" width="2" height="61.33" fill="#3663a8"/>
<rect x="161" y="424.5" width="2" height="58.19" fill="#3663a8"/>
<rect x="164" y="424.5" width="2" height="57.52" fill="#3663a8"/>
<rect x="167" y="424.5" width="2" height="82.97" fill="#3663a8"/>
<rect x="170" y="424.5" width="2" height="57.52" fill="#3663a8"/>
<rect x="173" y="424.5" width="2" height="56.70" fill="#3663a8"/>
<rect x="176" y="424.5" width="2" height="66.55" fill="#3663a8"/>
<rect x="179" y="424.5" width="2" height="60.80" fill="#3663a8"/>
<rect x="182" y="424.5" width="2" height="71.48" fill="#3663a8"/>
<rect x="186" y="424.5" width="2" height="75.58" fill="#3663a8"/>
<rect x="189" y="424.5" width="2" height="73.94" fill="#3663a8"/>
<rect x="192" y="424.5" width="2" height="63.27" fill="#3663a8"/>
<rect x="195" y="424.5" width="2" height="77.22" fill="#3663a8"/>
<rect x="198" y="424.5" width="2" height="64.91" fill="#3663a8"/>
<rect x="201" y="424.5" width="2" height="62.45" fill="#3663a8"/>
<rect x="204" y="424.5" width="2" height="75.58" fill="#3663a8"/>
<rect x="208" y="424.5" width="2" height="68.19" fill="#3663a8"/>
<rect x="211" y="424.5" width="2" height="60.80" fill="#3663a8"/>
<rect x="214" y="424.5" width="2" height="66.55" fill="#3663a8"/>
<rect x="217" y="424.5" width="2" height="67.37" fill="#3663a8"/>
<rect x="220" y="424.5" width="2" height="59.98" fill="#3663a8"/>
<rect x="223" y="424.5" width="2" height="72.30" fill="#3663a8"/>
<rect x="226" y="424.5" width="2" height="82.97" fill="#3663a8"/>
<rect x="230" y="424.5" width="2" height="78.05" fill="#3663a8"/>
<rect x="233" y="424.5" width="2" height="64.91" fill="#3663a8"/>
<rect x="236" y="424.5" width="2" height="89.54" fill="#3663a8"/>
<rect x="239" y="424.5" width="2" height="92.00" fill="#3663a8"/>
<rect x="242" y="424.5" width="2" height="84.61" fill="#3663a8"/>
<rect x="245" y="424.5" width="2" height="98.57" fill="#3663a8"/>
<rect x="248" y="424.5" width="2" height="86.26" fill="#3663a8"/>
<rect x="251" y="424.5" width="2" height="85.43" fill="#3663a8"/>
<rect x="255" y="424.5" width="2" height="103.96" fill="#3663a8"/>
<rect x="258" y="424.5" width="2" height="95.51" fill="#3663a8"/>
<rect x="261" y="424.5" width="2" height="93.27" fill="#3663a8"/>
<rect x="264" y="424.5" width="2" height="101.48" fill="#3663a8"/>
<rect x="267" y="424.5" width="2" height="94.09" fill="#3663a8"/>
<rect x="270" y="424.5" width="2" height="94.91" fill="#3663a8"/>
<rect x="273" y="424.5" width="2" height="110.51" fill="#3663a8"/>
<rect x="277" y="424.5" width="2" height="103.12" fill="#3663a8"/>
<rect x="280" y="424.5" width="2" height="92.45" fill="#3663a8"/>
<rect x="283" y="424.5" width="2" height="101.48" fill="#3663a8"/>
<rect x="286" y="424.5" width="2" height="103.12" fill="#3663a8"/>
<rect x="289" y="424.5" width="2" height="94.09" fill="#3663a8"/>
<rect x="292" y="424.5" width="2" height="96.55" fill="#3663a8"/>
<rect x="295" y="424.5" width="2" height="95.73" fill="#3663a8"/>
<rect x="298" y="424.5" width="2" height="108.87" fill="#3663a8"/>
<rect x="302" y="424.5" width="2" height="101.48" fill="#3663a8"/>
<rect x="305" y="424.5" width="2" height="121.18" fill="#3663a8"/>
<rect x="308" y="424.5" width="2" height="108.87" fill="#3663a8"/>
<rect x="311" y="424.5" width="2" height="100.66" fill="#3663a8"/>
<rect x="314" y="424.5" width="2" height="109.69" fill="#3663a8"/>
<rect x="317" y="424.5" width="2" height="115.43" fill="#3663a8"/>
<rect x="320" y="424.5" width="2" height="116.26" fill="#3663a8"/>
<rect x="324" y="424.5" width="2" height="113.79" fill="#3663a8"/>
<rect x="327" y="424.5" width="2" height="108.87" fill="#3663a8"/>
<rect x="330" y="424.5" width="2" height="114.61" fill="#3663a8"/>
<rect x="333" y="424.5" width="2" height="110.51" fill="#3663a8"/>
<rect x="336" y="424.5" width="2" height="114.61" fill="#3663a8"/>
<rect x="339" y="424.5" width="2" height="127.75" fill="#3663a8"/>
<rect x="342" y="424.5" width="2" height="112.15" fill="#3663a8"/>
<rect x="346" y="424.5" width="2" height="118.72" fill="#3663a8"/>
<rect x="349" y="424.5" width="2" height="130.21" fill="#3663a8"/>
<rect x="352" y="424.5" width="2" height="114.35" fill="#3663a8"/>
<rect x="355" y="424.5" width="2" height="115.73" fill="#3663a8"/>
<rect x="358" y="424.5" width="2" height="112.45" fill="#3663a8"/>
<rect x="361" y="424.5" width="2" height="99.51" fill="#3663a8"/>
<rect x="364" y="424.5" width="2" height="106.70" fill="#3663a8"/>
<rect x="367" y="424.5" width="2" height="95.20" fill="#3663a8"/>
<rect x="371" y="424.5" width="2" height="96.85" fill="#3663a8"/>
<rect x="374" y="424.5" width="2" height="96.43" fill="#3663a8"/>
<rect x="377" y="424.5" width="2" height="91.92" fill="#3663a8"/>
<rect x="380" y="424.5" width="2" height="110.80" fill="#3663a8"/>
<rect x="383" y="424.5" width="2" height="105.06" fill="#3663a8"/>
<rect x="386" y="424.5" width="2" height="104.43" fill="#3663a8"/>
<rect x="389" y="424.5" width="2" height="112.45" fill="#3663a8"/>
<rect x="393" y="424.5" width="2" height="124.76" fill="#3663a8"/>
<rect x="396" y="424.5" width="2" height="91.92" fill="#3663a8"/>
<rect x="399" y="424.5" width="2" height="115.73" fill="#3663a8"/>
<rect x="402" y="424.5" width="2" height="107.66" fill="#3663a8"/>
<rect x="405" y="424.5" width="2" height="126.40" fill="#3663a8"/>
<rect x="408" y="424.5" width="2" height="114.91" fill="#3663a8"/>
<rect x="411" y="424.5" width="2" height="136.26" fill="#3663a8"/>
<rect x="415" y="424.5" width="2" height="126.13" fill="#3663a8"/>
<rect x="418" y="424.5" width="2" height="127.98" fill="#3663a8"/>
<rect x="421" y="424.5" width="2" height="133.79" fill="#3663a8"/>
<rect x="424" y="424.5" width="2" height="137.21" fill="#3663a8"/>
<rect x="427" y="424.5" width="2" height="146.11" fill="#3663a8"/>
<rect x="430" y="424.5" width="2" height="109.16" fill="#3663a8"/>
<rect x="433" y="424.5" width="2" height="104.24" fill="#3663a8"/>
<rect x="436" y="424.5" width="2" height="116.55" fill="#3663a8"/>
<rect x="440" y="424.5" width="2" height="115.73" fill="#3663a8"/>
<rect x="443" y="424.5" width="2" height="133.79" fill="#3663a8"/>
<rect x="446" y="424.5" width="2" height="140.51" fill="#3663a8"/>
<rect x="449" y="424.5" width="2" height="140.10" fill="#3663a8"/>
<rect x="452" y="424.5" width="2" height="120.13" fill="#3663a8"/>
<rect x="455" y="424.5" width="2" height="156.26" fill="#3663a8"/>
<rect x="458" y="424.5" width="2" height="117.67" fill="#3663a8"/>
<rect x="462" y="424.5" width="2" height="134.91" fill="#3663a8"/>
<rect x="465" y="424.5" width="2" height="109.46" fill="#3663a8"/>
<rect x="468" y="424.5" width="2" height="116.03" fill="#3663a8"/>
<rect x="471" y="424.5" width="2" height="139.01" fill="#3663a8"/>
<rect x="474" y="424.5" width="2" height="133.27" fill="#3663a8"/>
<rect x="477" y="424.5" width="2" height="162.00" fill="#3663a8"/>
<rect x="480" y="424.5" width="2" height="132.45" fill="#3663a8"/>
<rect x="484" y="424.5" width="2" height="162.00" fill="#3663a8"/>
<rect x="487" y="424.5" width="2" height="113.56" fill="#3663a8"/>
<rect x="490" y="424.5" width="2" height="156.26" fill="#3663a8"/>
<rect x="493" y="424.5" width="2" height="132.45" fill="#3663a8"/>
<rect x="496" y="424.5" width="2" height="150.51" fill="#3663a8"/>
<rect x="499" y="424.5" width="2" height="149.21" fill="#3663a8"/>
<rect x="502" y="424.5" width="2" height="144.76" fill="#3663a8"/>
<rect x="505" y="424.5" width="2" height="128.34" fill="#3663a8"/>
<rect x="509" y="424.5" width="2" height="148.87" fill="#3663a8"/>
<rect x="512" y="424.5" width="2" height="146.13" fill="#3663a8"/>
<rect x="515" y="424.5" width="2" height="128.34" fill="#3663a8"/>
<rect x="518" y="424.5" width="2" height="136.55" fill="#3663a8"/>
<rect x="521" y="424.5" width="2" height="128.34" fill="#3663a8"/>
<rect x="524" y="424.5" width="2" height="157.90" fill="#3663a8"/>
<rect x="527" y="424.5" width="2" height="152.90" fill="#3663a8"/>
<rect x="531" y="424.5" width="2" height="155.43" fill="#3663a8"/>
<rect x="534" y="424.5" width="2" height="154.61" fill="#3663a8"/>
<rect x="537" y="424.5" width="2" height="148.87" fill="#3663a8"/>
<rect x="540" y="424.5" width="2" height="119.87" fill="#3663a8"/>
<rect x="543" y="424.5" width="2" height="155.58" fill="#3663a8"/>
<rect x="546" y="424.5" width="2" height="144.24" fill="#3663a8"/>
<rect x="549" y="424.5" width="2" height="133.56" fill="#3663a8"/>
<rect x="552" y="424.5" width="2" height="139.31" fill="#3663a8"/>
<rect x="556" y="424.5" width="2" height="143.41" fill="#3663a8"/>
<rect x="559" y="424.5" width="2" height="148.34" fill="#3663a8"/>
<rect x="562" y="424.5" width="2" height="163.12" fill="#3663a8"/>
<rect x="565" y="424.5" width="2" height="143.41" fill="#3663a8"/>
<rect x="568" y="424.5" width="2" height="151.62" fill="#3663a8"/>
<rect x="571" y="424.5" width="2" height="152.45" fill="#3663a8"/>
<rect x="574" y="424.5" width="2" height="138.49" fill="#3663a8"/>
<rect x="578" y="424.5" width="2" height="163.12" fill="#3663a8"/>
<rect x="581" y="424.5" width="2" height="131.92" fill="#3663a8"/>
<rect x="584" y="424.5" width="2" height="164.76" fill="#3663a8"/>
<rect x="587" y="424.5" width="2" height="161.48" fill="#3663a8"/>
<rect x="590" y="424.5" width="2" height="134.38" fill="#3663a8"/>
<rect x="593" y="424.5" width="2" height="124.53" fill="#3663a8"/>
<rect x="596" y="424.5" width="2" height="154.09" fill="#3663a8"/>
<rect x="600" y="424.5" width="2" height="178.72" fill="#3663a8"/>
<rect x="603" y="424.5" width="2" height="178.72" fill="#3663a8"/>
<rect x="606" y="424.5" width="2" height="149.16" fill="#3663a8"/>
<rect x="609" y="424.5" width="2" height="191.03" fill="#3663a8"/>
<rect x="612" y="424.5" width="2" height="169.69" fill="#3663a8"/>
<rect x="615" y="424.5" width="2" height="164.76" fill="#3663a8"/>
<rect x="618" y="424.5" width="2" height="164.76" fill="#3663a8"/>
<rect x="621" y="424.5" width="2" height="195.14" fill="#3663a8"/>
<rect x="625" y="424.5" width="2" height="181.33" fill="#3663a8"/>
<rect x="628" y="424.5" width="2" height="169.01" fill="#3663a8"/>
<rect x="631" y="424.5" width="2" height="164.09" fill="#3663a8"/>
<rect x="634" y="424.5" width="2" height="201.85" fill="#3663a8"/>
<rect x="637" y="424.5" width="2" height="195.83" fill="#3663a8"/>
<rect x="640" y="424.5" width="2" height="197.08" fill="#3663a8"/>
<rect x="643" y="424.5" width="2" height="206.93" fill="#3663a8"/>
<rect x="647" y="424.5" width="2" height="155.20" fill="#3663a8"/>
<rect x="650" y="424.5" width="2" height="197.90" fill="#3663a8"/>
<rect x="653" y="424.5" width="2" height="175.73" fill="#3663a8"/>
<rect x="656" y="424.5" width="2" height="174.09" fill="#3663a8"/>
<rect x="659" y="424.5" width="2" height="204.47" fill="#3663a8"/>
<rect x="662" y="424.5" width="2" height="219.24" fill="#3663a8"/>
<rect x="665" y="424.5" width="2" height="167.52" fill="#3663a8"/>
<rect x="669" y="424.5" width="2" height="192.97" fill="#3663a8"/>
<rect x="672" y="424.5" width="2" height="206.93" fill="#3663a8"/>
<rect x="675" y="424.5" width="2" height="183.94" fill="#3663a8"/>
<rect x="678" y="424.5" width="2" height="224.17" fill="#3663a8"/>
<rect x="681" y="424.5" width="2" height="183.12" fill="#3663a8"/>
<rect x="684" y="424.5" width="2" height="174.09" fill="#3663a8"/>
<rect x="9.70" y="447.56" width="2.6" height="4" fill="#c9a47a" opacity="0.85"/>
<rect x="12.84" y="456.59" width="2.6" height="4" fill="#c9a47a" opacity="0.85"/>
<rect x="15.97" y="460.36" width="2.6" height="4" fill="#c9a47a" opacity="0.85"/>
<rect x="19.11" y="450.02" width="2.6" height="4" fill="#c9a47a" opacity="0.85"/>
<rect x="22.24" y="447.23" width="2.6" height="4" fill="#c9a47a" opacity="0.85"/>
<rect x="25.38" y="456.59" width="2.6" height="4" fill="#c9a47a" opacity="0.85"/>
<rect x="28.51" y="447.56" width="2.6" height="4" fill="#c9a47a" opacity="0.85"/>
<rect x="31.65" y="456.59" width="2.6" height="4" fill="#c9a47a" opacity="0.85"/>
<rect x="34.79" y="457.41" width="2.6" height="4" fill="#c9a47a" opacity="0.85"/>
<rect x="37.92" y="458.23" width="2.6" height="4" fill="#c9a47a" opacity="0.85"/>
<rect x="41.06" y="455.77" width="2.6" height="4" fill="#c9a47a" opacity="0.85"/>
<rect x="44.19" y="453.30" width="2.6" height="4" fill="#c9a47a" opacity="0.85"/>
<rect x="47.33" y="453.30" width="2.6" height="4" fill="#c9a47a" opacity="0.85"/>
<rect x="50.47" y="457.41" width="2.6" height="4" fill="#c9a47a" opacity="0.85"/>
<rect x="53.60" y="449.20" width="2.6" height="4" fill="#c9a47a" opacity="0.85"/>
<rect x="56.74" y="449.20" width="2.6" height="4" fill="#c9a47a" opacity="0.85"/>
<rect x="59.87" y="456.59" width="2.6" height="4" fill="#c9a47a" opacity="0.85"/>
<rect x="63.01" y="459.87" width="2.6" height="4" fill="#c9a47a" opacity="0.85"/>
<rect x="66.14" y="454.61" width="2.6" height="4" fill="#c9a47a" opacity="0.85"/>
<rect x="69.28" y="466.59" width="2.6" height="4" fill="#c9a47a" opacity="0.85"/>
<rect x="72.42" y="455.09" width="2.6" height="4" fill="#c9a47a" opacity="0.85"/>
<rect x="75.55" y="467.41" width="2.6" height="4" fill="#c9a47a" opacity="0.85"/>
<rect x="78.69" y="447.70" width="2.6" height="4" fill="#c9a47a" opacity="0.85"/>
<rect x="81.82" y="448.53" width="2.6" height="4" fill="#c9a47a" opacity="0.85"/>
<rect x="84.96" y="455.91" width="2.6" height="4" fill="#c9a47a" opacity="0.85"/>
<rect x="88.10" y="464.95" width="2.6" height="4" fill="#c9a47a" opacity="0.85"/>
<rect x="91.23" y="462.48" width="2.6" height="4" fill="#c9a47a" opacity="0.85"/>
<rect x="94.37" y="460.02" width="2.6" height="4" fill="#c9a47a" opacity="0.85"/>
<rect x="97.50" y="457.56" width="2.6" height="4" fill="#c9a47a" opacity="0.85"/>
<rect x="100.64" y="460.84" width="2.6" height="4" fill="#c9a47a" opacity="0.85"/>
<rect x="103.77" y="453.45" width="2.6" height="4" fill="#c9a47a" opacity="0.85"/>
<rect x="106.91" y="449.35" width="2.6" height="4" fill="#c9a47a" opacity="0.85"/>
<rect x="110.05" y="450.99" width="2.6" height="4" fill="#c9a47a" opacity="0.85"/>
<rect x="113.18" y="453.45" width="2.6" height="4" fill="#c9a47a" opacity="0.85"/>
<rect x="116.32" y="466.59" width="2.6" height="4" fill="#c9a47a" opacity="0.85"/>
<rect x="119.45" y="464.95" width="2.6" height="4" fill="#c9a47a" opacity="0.85"/>
<rect x="122.59" y="475.62" width="2.6" height="4" fill="#c9a47a" opacity="0.85"/>
<rect x="125.72" y="467.41" width="2.6" height="4" fill="#c9a47a" opacity="0.85"/>
<rect x="128.86" y="467.41" width="2.6" height="4" fill="#c9a47a" opacity="0.85"/>
<rect x="132.00" y="471.51" width="2.6" height="4" fill="#c9a47a" opacity="0.85"/>
<rect x="135.13" y="472.33" width="2.6" height="4" fill="#c9a47a" opacity="0.85"/>
<rect x="138.27" y="471.51" width="2.6" height="4" fill="#c9a47a" opacity="0.85"/>
<rect x="141.40" y="477.26" width="2.6" height="4" fill="#c9a47a" opacity="0.85"/>
<rect x="144.54" y="475.62" width="2.6" height="4" fill="#c9a47a" opacity="0.85"/>
<rect x="147.68" y="479.72" width="2.6" height="4" fill="#c9a47a" opacity="0.85"/>
<rect x="150.81" y="472.33" width="2.6" height="4" fill="#c9a47a" opacity="0.85"/>
<rect x="153.95" y="482.19" width="2.6" height="4" fill="#c9a47a" opacity="0.85"/>
<rect x="157.08" y="479.72" width="2.6" height="4" fill="#c9a47a" opacity="0.85"/>
<rect x="160.22" y="485.21" width="2.6" height="4" fill="#c9a47a" opacity="0.85"/>
<rect x="163.35" y="485.77" width="2.6" height="4" fill="#c9a47a" opacity="0.85"/>
<rect x="166.49" y="483.30" width="2.6" height="4" fill="#c9a47a" opacity="0.85"/>
<rect x="169.63" y="491.51" width="2.6" height="4" fill="#c9a47a" opacity="0.85"/>
<rect x="172.76" y="487.41" width="2.6" height="4" fill="#c9a47a" opacity="0.85"/>
<rect x="175.90" y="482.48" width="2.6" height="4" fill="#c9a47a" opacity="0.85"/>
<rect x="179.03" y="487.41" width="2.6" height="4" fill="#c9a47a" opacity="0.85"/>
<rect x="182.17" y="489.87" width="2.6" height="4" fill="#c9a47a" opacity="0.85"/>
<rect x="185.30" y="495.62" width="2.6" height="4" fill="#c9a47a" opacity="0.85"/>
<rect x="188.44" y="500.55" width="2.6" height="4" fill="#c9a47a" opacity="0.85"/>
<rect x="191.58" y="500.55" width="2.6" height="4" fill="#c9a47a" opacity="0.85"/>
<rect x="194.71" y="495.62" width="2.6" height="4" fill="#c9a47a" opacity="0.85"/>
<rect x="197.85" y="500.55" width="2.6" height="4" fill="#c9a47a" opacity="0.85"/>
<rect x="200.98" y="494.80" width="2.6" height="4" fill="#c9a47a" opacity="0.85"/>
<rect x="204.12" y="490.69" width="2.6" height="4" fill="#c9a47a" opacity="0.85"/>
<rect x="207.26" y="500.55" width="2.6" height="4" fill="#c9a47a" opacity="0.85"/>
<rect x="210.39" y="497.26" width="2.6" height="4" fill="#c9a47a" opacity="0.85"/>
<rect x="213.53" y="493.98" width="2.6" height="4" fill="#c9a47a" opacity="0.85"/>
<rect x="216.66" y="494.80" width="2.6" height="4" fill="#c9a47a" opacity="0.85"/>
<rect x="219.80" y="496.44" width="2.6" height="4" fill="#c9a47a" opacity="0.85"/>
<rect x="222.93" y="495.62" width="2.6" height="4" fill="#c9a47a" opacity="0.85"/>
<rect x="226.07" y="498.90" width="2.6" height="4" fill="#c9a47a" opacity="0.85"/>
<rect x="229.21" y="503.01" width="2.6" height="4" fill="#c9a47a" opacity="0.85"/>
<rect x="232.34" y="500.55" width="2.6" height="4" fill="#c9a47a" opacity="0.85"/>
<rect x="235.48" y="495.62" width="2.6" height="4" fill="#c9a47a" opacity="0.85"/>
<rect x="238.61" y="507.93" width="2.6" height="4" fill="#c9a47a" opacity="0.85"/>
<rect x="241.75" y="512.04" width="2.6" height="4" fill="#c9a47a" opacity="0.85"/>
<rect x="244.88" y="509.58" width="2.6" height="4" fill="#c9a47a" opacity="0.85"/>
<rect x="248.02" y="521.07" width="2.6" height="4" fill="#c9a47a" opacity="0.85"/>
<rect x="251.16" y="511.22" width="2.6" height="4" fill="#c9a47a" opacity="0.85"/>
<rect x="254.29" y="513.90" width="2.6" height="4" fill="#c9a47a" opacity="0.85"/>
<rect x="257.43" y="518.01" width="2.6" height="4" fill="#c9a47a" opacity="0.85"/>
<rect x="260.56" y="517.41" width="2.6" height="4" fill="#c9a47a" opacity="0.85"/>
<rect x="263.70" y="522.33" width="2.6" height="4" fill="#c9a47a" opacity="0.85"/>
<rect x="266.84" y="524.80" width="2.6" height="4" fill="#c9a47a" opacity="0.85"/>
<rect x="269.97" y="526.44" width="2.6" height="4" fill="#c9a47a" opacity="0.85"/>
<rect x="273.11" y="524.80" width="2.6" height="4" fill="#c9a47a" opacity="0.85"/>
<rect x="276.24" y="533.83" width="2.6" height="4" fill="#c9a47a" opacity="0.85"/>
<rect x="279.38" y="533.83" width="2.6" height="4" fill="#c9a47a" opacity="0.85"/>
<rect x="282.51" y="521.51" width="2.6" height="4" fill="#c9a47a" opacity="0.85"/>
<rect x="285.65" y="528.08" width="2.6" height="4" fill="#c9a47a" opacity="0.85"/>
<rect x="288.79" y="533.83" width="2.6" height="4" fill="#c9a47a" opacity="0.85"/>
<rect x="291.92" y="526.44" width="2.6" height="4" fill="#c9a47a" opacity="0.85"/>
<rect x="295.06" y="523.98" width="2.6" height="4" fill="#c9a47a" opacity="0.85"/>
<rect x="298.19" y="523.16" width="2.6" height="4" fill="#c9a47a" opacity="0.85"/>
<rect x="301.33" y="530.55" width="2.6" height="4" fill="#c9a47a" opacity="0.85"/>
<rect x="304.47" y="531.37" width="2.6" height="4" fill="#c9a47a" opacity="0.85"/>
<rect x="307.60" y="540.40" width="2.6" height="4" fill="#c9a47a" opacity="0.85"/>
<rect x="310.74" y="536.29" width="2.6" height="4" fill="#c9a47a" opacity="0.85"/>
<rect x="313.87" y="540.40" width="2.6" height="4" fill="#c9a47a" opacity="0.85"/>
<rect x="317.01" y="542.86" width="2.6" height="4" fill="#c9a47a" opacity="0.85"/>
<rect x="320.14" y="543.68" width="2.6" height="4" fill="#c9a47a" opacity="0.85"/>
<rect x="323.28" y="542.04" width="2.6" height="4" fill="#c9a47a" opacity="0.85"/>
<rect x="326.42" y="538.76" width="2.6" height="4" fill="#c9a47a" opacity="0.85"/>
<rect x="329.55" y="540.40" width="2.6" height="4" fill="#c9a47a" opacity="0.85"/>
<rect x="332.69" y="540.07" width="2.6" height="4" fill="#c9a47a" opacity="0.85"/>
<rect x="335.82" y="542.86" width="2.6" height="4" fill="#c9a47a" opacity="0.85"/>
<rect x="338.96" y="541.71" width="2.6" height="4" fill="#c9a47a" opacity="0.85"/>
<rect x="342.09" y="550.25" width="2.6" height="4" fill="#c9a47a" opacity="0.85"/>
<rect x="345.23" y="542.04" width="2.6" height="4" fill="#c9a47a" opacity="0.85"/>
<rect x="348.37" y="542.86" width="2.6" height="4" fill="#c9a47a" opacity="0.85"/>
<rect x="351.50" y="552.04" width="2.6" height="4" fill="#c9a47a" opacity="0.85"/>
<rect x="354.64" y="541.51" width="2.6" height="4" fill="#c9a47a" opacity="0.85"/>
<rect x="357.77" y="543.16" width="2.6" height="4" fill="#c9a47a" opacity="0.85"/>
<rect x="360.91" y="536.59" width="2.6" height="4" fill="#c9a47a" opacity="0.85"/>
<rect x="364.05" y="522.30" width="2.6" height="4" fill="#c9a47a" opacity="0.85"/>
<rect x="367.18" y="529.20" width="2.6" height="4" fill="#c9a47a" opacity="0.85"/>
<rect x="370.32" y="520.99" width="2.6" height="4" fill="#c9a47a" opacity="0.85"/>
<rect x="373.45" y="520.99" width="2.6" height="4" fill="#c9a47a" opacity="0.85"/>
<rect x="376.59" y="520.99" width="2.6" height="4" fill="#c9a47a" opacity="0.85"/>
<rect x="379.72" y="517.70" width="2.6" height="4" fill="#c9a47a" opacity="0.85"/>
<rect x="382.86" y="531.66" width="2.6" height="4" fill="#c9a47a" opacity="0.85"/>
<rect x="386.00" y="530.84" width="2.6" height="4" fill="#c9a47a" opacity="0.85"/>
<rect x="389.13" y="525.09" width="2.6" height="4" fill="#c9a47a" opacity="0.85"/>
<rect x="392.27" y="530.84" width="2.6" height="4" fill="#c9a47a" opacity="0.85"/>
<rect x="395.40" y="537.41" width="2.6" height="4" fill="#c9a47a" opacity="0.85"/>
<rect x="398.54" y="524.27" width="2.6" height="4" fill="#c9a47a" opacity="0.85"/>
<rect x="401.68" y="533.30" width="2.6" height="4" fill="#c9a47a" opacity="0.85"/>
<rect x="404.81" y="534.95" width="2.6" height="4" fill="#c9a47a" opacity="0.85"/>
<rect x="407.95" y="545.62" width="2.6" height="4" fill="#c9a47a" opacity="0.85"/>
<rect x="411.08" y="542.33" width="2.6" height="4" fill="#c9a47a" opacity="0.85"/>
<rect x="414.22" y="550.22" width="2.6" height="4" fill="#c9a47a" opacity="0.85"/>
<rect x="417.35" y="548.90" width="2.6" height="4" fill="#c9a47a" opacity="0.85"/>
<rect x="420.49" y="552.19" width="2.6" height="4" fill="#c9a47a" opacity="0.85"/>
<rect x="423.63" y="554.65" width="2.6" height="4" fill="#c9a47a" opacity="0.85"/>
<rect x="426.76" y="556.29" width="2.6" height="4" fill="#c9a47a" opacity="0.85"/>
<rect x="429.90" y="559.58" width="2.6" height="4" fill="#c9a47a" opacity="0.85"/>
<rect x="433.03" y="551.86" width="2.6" height="4" fill="#c9a47a" opacity="0.85"/>
<rect x="436.17" y="540.69" width="2.6" height="4" fill="#c9a47a" opacity="0.85"/>
<rect x="439.30" y="542.01" width="2.6" height="4" fill="#c9a47a" opacity="0.85"/>
<rect x="442.44" y="537.41" width="2.6" height="4" fill="#c9a47a" opacity="0.85"/>
<rect x="445.58" y="554.80" width="2.6" height="4" fill="#c9a47a" opacity="0.85"/>
<rect x="448.71" y="561.37" width="2.6" height="4" fill="#c9a47a" opacity="0.85"/>
<rect x="451.85" y="549.20" width="2.6" height="4" fill="#c9a47a" opacity="0.85"/>
<rect x="454.98" y="576.29" width="2.6" height="4" fill="#c9a47a" opacity="0.85"/>
<rect x="458.12" y="577.11" width="2.6" height="4" fill="#c9a47a" opacity="0.85"/>
<rect x="461.26" y="556.59" width="2.6" height="4" fill="#c9a47a" opacity="0.85"/>
<rect x="464.39" y="559.05" width="2.6" height="4" fill="#c9a47a" opacity="0.85"/>
<rect x="467.53" y="547.56" width="2.6" height="4" fill="#c9a47a" opacity="0.85"/>
<rect x="470.66" y="556.59" width="2.6" height="4" fill="#c9a47a" opacity="0.85"/>
<rect x="473.80" y="559.05" width="2.6" height="4" fill="#c9a47a" opacity="0.85"/>
<rect x="476.93" y="559.87" width="2.6" height="4" fill="#c9a47a" opacity="0.85"/>
<rect x="480.07" y="568.08" width="2.6" height="4" fill="#c9a47a" opacity="0.85"/>
<rect x="483.21" y="559.05" width="2.6" height="4" fill="#c9a47a" opacity="0.85"/>
<rect x="486.34" y="566.44" width="2.6" height="4" fill="#c9a47a" opacity="0.85"/>
<rect x="489.48" y="556.59" width="2.6" height="4" fill="#c9a47a" opacity="0.85"/>
<rect x="492.61" y="570.22" width="2.6" height="4" fill="#c9a47a" opacity="0.85"/>
<rect x="495.75" y="563.16" width="2.6" height="4" fill="#c9a47a" opacity="0.85"/>
<rect x="498.88" y="570.22" width="2.6" height="4" fill="#c9a47a" opacity="0.85"/>
<rect x="502.02" y="566.44" width="2.6" height="4" fill="#c9a47a" opacity="0.85"/>
<rect x="505.16" y="563.98" width="2.6" height="4" fill="#c9a47a" opacity="0.85"/>
<rect x="508.29" y="563.16" width="2.6" height="4" fill="#c9a47a" opacity="0.85"/>
<rect x="511.43" y="565.62" width="2.6" height="4" fill="#c9a47a" opacity="0.85"/>
<rect x="514.56" y="564.80" width="2.6" height="4" fill="#c9a47a" opacity="0.85"/>
<rect x="517.70" y="557.41" width="2.6" height="4" fill="#c9a47a" opacity="0.85"/>
<rect x="520.84" y="557.41" width="2.6" height="4" fill="#c9a47a" opacity="0.85"/>
<rect x="523.97" y="553.30" width="2.6" height="4" fill="#c9a47a" opacity="0.85"/>
<rect x="527.11" y="568.08" width="2.6" height="4" fill="#c9a47a" opacity="0.85"/>
<rect x="530.24" y="568.90" width="2.6" height="4" fill="#c9a47a" opacity="0.85"/>
<rect x="533.38" y="572.19" width="2.6" height="4" fill="#c9a47a" opacity="0.85"/>
<rect x="536.51" y="575.47" width="2.6" height="4" fill="#c9a47a" opacity="0.85"/>
<rect x="539.65" y="573.16" width="2.6" height="4" fill="#c9a47a" opacity="0.85"/>
<rect x="542.79" y="562.89" width="2.6" height="4" fill="#c9a47a" opacity="0.85"/>
<rect x="545.92" y="572.48" width="2.6" height="4" fill="#c9a47a" opacity="0.85"/>
<rect x="549.06" y="568.38" width="2.6" height="4" fill="#c9a47a" opacity="0.85"/>
<rect x="552.19" y="563.45" width="2.6" height="4" fill="#c9a47a" opacity="0.85"/>
<rect x="555.33" y="568.38" width="2.6" height="4" fill="#c9a47a" opacity="0.85"/>
<rect x="558.47" y="565.91" width="2.6" height="4" fill="#c9a47a" opacity="0.85"/>
<rect x="561.60" y="570.02" width="2.6" height="4" fill="#c9a47a" opacity="0.85"/>
<rect x="564.74" y="578.23" width="2.6" height="4" fill="#c9a47a" opacity="0.85"/>
<rect x="567.87" y="576.59" width="2.6" height="4" fill="#c9a47a" opacity="0.85"/>
<rect x="571.01" y="577.41" width="2.6" height="4" fill="#c9a47a" opacity="0.85"/>
<rect x="574.14" y="577.41" width="2.6" height="4" fill="#c9a47a" opacity="0.85"/>
<rect x="577.28" y="568.38" width="2.6" height="4" fill="#c9a47a" opacity="0.85"/>
<rect x="580.42" y="579.87" width="2.6" height="4" fill="#c9a47a" opacity="0.85"/>
<rect x="583.55" y="565.91" width="2.6" height="4" fill="#c9a47a" opacity="0.85"/>
<rect x="586.69" y="584.80" width="2.6" height="4" fill="#c9a47a" opacity="0.85"/>
<rect x="589.82" y="585.62" width="2.6" height="4" fill="#c9a47a" opacity="0.85"/>
<rect x="592.96" y="579.87" width="2.6" height="4" fill="#c9a47a" opacity="0.85"/>
<rect x="596.09" y="570.02" width="2.6" height="4" fill="#c9a47a" opacity="0.85"/>
<rect x="599.23" y="577.41" width="2.6" height="4" fill="#c9a47a" opacity="0.85"/>
<rect x="602.37" y="585.62" width="2.6" height="4" fill="#c9a47a" opacity="0.85"/>
<rect x="605.50" y="597.93" width="2.6" height="4" fill="#c9a47a" opacity="0.85"/>
<rect x="608.64" y="582.33" width="2.6" height="4" fill="#c9a47a" opacity="0.85"/>
<rect x="611.77" y="593.83" width="2.6" height="4" fill="#c9a47a" opacity="0.85"/>
<rect x="614.91" y="591.86" width="2.6" height="4" fill="#c9a47a" opacity="0.85"/>
<rect x="618.05" y="591.37" width="2.6" height="4" fill="#c9a47a" opacity="0.85"/>
<rect x="621.18" y="590.55" width="2.6" height="4" fill="#c9a47a" opacity="0.85"/>
<rect x="624.32" y="605.47" width="2.6" height="4" fill="#c9a47a" opacity="0.85"/>
<rect x="627.45" y="597.26" width="2.6" height="4" fill="#c9a47a" opacity="0.85"/>
<rect x="630.59" y="597.26" width="2.6" height="4" fill="#c9a47a" opacity="0.85"/>
<rect x="633.72" y="576.33" width="2.6" height="4" fill="#c9a47a" opacity="0.85"/>
<rect x="636.86" y="605.62" width="2.6" height="4" fill="#c9a47a" opacity="0.85"/>
<rect x="640.00" y="605.62" width="2.6" height="4" fill="#c9a47a" opacity="0.85"/>
<rect x="643.13" y="607.26" width="2.6" height="4" fill="#c9a47a" opacity="0.85"/>
<rect x="646.27" y="619.58" width="2.6" height="4" fill="#c9a47a" opacity="0.85"/>
<rect x="649.40" y="605.62" width="2.6" height="4" fill="#c9a47a" opacity="0.85"/>
<rect x="652.54" y="612.19" width="2.6" height="4" fill="#c9a47a" opacity="0.85"/>
<rect x="655.67" y="605.62" width="2.6" height="4" fill="#c9a47a" opacity="0.85"/>
<rect x="658.81" y="600.69" width="2.6" height="4" fill="#c9a47a" opacity="0.85"/>
<rect x="661.95" y="614.65" width="2.6" height="4" fill="#c9a47a" opacity="0.85"/>
<rect x="665.08" y="620.07" width="2.6" height="4" fill="#c9a47a" opacity="0.85"/>
<rect x="668.22" y="599.87" width="2.6" height="4" fill="#c9a47a" opacity="0.85"/>
<rect x="671.35" y="603.16" width="2.6" height="4" fill="#c9a47a" opacity="0.85"/>
<rect x="674.49" y="618.76" width="2.6" height="4" fill="#c9a47a" opacity="0.85"/>
<rect x="677.63" y="610.55" width="2.6" height="4" fill="#c9a47a" opacity="0.85"/>
<rect x="680.76" y="636.00" width="2.6" height="4" fill="#c9a47a" opacity="0.85"/>
<rect x="683.90" y="612.19" width="2.6" height="4" fill="#c9a47a" opacity="0.85"/>
<rect x="687.03" y="602.33" width="2.6" height="4" fill="#c9a47a" opacity="0.85"/>
<rect x="721.8" y="424.5" width="1.3" height="168" fill="#111"/>
<rect x="721.8" y="605" width="1.3" height="83.5" fill="#111"/>
<rect x="721.8" y="591.5" width="36.5" height="1.3" fill="#111"/>
<rect x="721.8" y="605" width="36.5" height="1.3" fill="#111"/>
<rect x="723.1" y="592.8" width="35" height="12.2" fill="#ffffff"/>
<rect x="721.8" y="687.5" width="36.5" height="1.3" fill="#111"/>
<rect x="0" y="668" width="10" height="25" fill="#d6d9e1"/>
<rect x="10" y="688" width="748" height="22" fill="#d3d6de"/>
<path d="M10 709.5 L11.0 689.7 L14.1 689.9 L17.3 689.9 L20.4 689.9 L23.5 688.7 L26.7 689.7 L29.8 689.7 L33.0 689.4 L36.1 690.9 L39.2 689.4 L42.4 689.7 L45.5 690.1 L48.6 689.2 L51.8 690.4 L54.9 689.4 L58.0 689.6 L61.2 689.9 L64.3 690.6 L67.4 689.7 L70.6 690.7 L73.7 689.7 L76.9 690.9 L80.0 689.2 L83.1 689.3 L86.3 689.9 L89.4 690.6 L92.5 689.9 L95.7 689.8 L98.8 690.4 L101.9 689.5 L105.1 688.5 L108.2 690.5 L111.3 689.8 L114.5 689.9 L117.6 690.1 L120.8 691.3 L123.9 692.0 L127.0 690.4 L130.2 691.1 L133.3 691.5 L136.4 691.2 L139.6 690.9 L142.7 692.1 L145.8 692.7 L149.0 691.2 L152.1 691.6 L155.2 693.1 L158.4 692.5 L161.5 692.2 L164.7 692.2 L167.8 694.3 L170.9 692.2 L174.1 692.1 L177.2 692.9 L180.3 692.4 L183.5 693.4 L186.6 693.7 L189.7 693.6 L192.9 692.6 L196.0 693.8 L199.1 692.8 L202.3 692.6 L205.4 693.7 L208.6 693.1 L211.7 692.4 L214.8 692.9 L218.0 693.0 L221.1 692.4 L224.2 693.4 L227.4 694.3 L230.5 693.9 L233.6 692.8 L236.8 694.9 L239.9 695.1 L243.0 694.5 L246.2 695.7 L249.3 694.6 L252.5 694.5 L255.6 696.1 L258.7 695.4 L261.9 695.2 L265.0 695.9 L268.1 695.3 L271.3 695.4 L274.4 696.7 L277.5 696.1 L280.7 695.2 L283.8 695.9 L287.0 696.1 L290.1 695.3 L293.2 695.5 L296.4 695.4 L299.5 696.6 L302.6 695.9 L305.8 697.6 L308.9 696.6 L312.0 695.9 L315.2 696.6 L318.3 697.1 L321.4 697.2 L324.6 697.0 L327.7 696.6 L330.9 697.1 L334.0 696.7 L337.1 697.1 L340.3 698.2 L343.4 696.8 L346.5 697.4 L349.7 698.4 L352.8 697.0 L355.9 697.1 L359.1 696.9 L362.2 695.8 L365.3 696.4 L368.5 695.4 L371.6 695.5 L374.8 695.5 L377.9 695.1 L381.0 696.7 L384.2 696.2 L387.3 696.2 L390.4 696.9 L393.6 697.9 L396.7 695.1 L399.8 697.1 L403.0 696.5 L406.1 698.1 L409.2 697.1 L412.4 698.9 L415.5 698.0 L418.7 698.2 L421.8 698.7 L424.9 699.0 L428.1 699.8 L431.2 696.6 L434.3 696.2 L437.5 697.2 L440.6 697.1 L443.7 698.7 L446.9 699.3 L450.0 699.2 L453.1 697.5 L456.3 700.6 L459.4 697.3 L462.6 698.8 L465.7 696.6 L468.8 697.2 L472.0 699.1 L475.1 698.7 L478.2 701.1 L481.4 698.6 L484.5 701.1 L487.6 697.0 L490.8 700.6 L493.9 698.6 L497.0 700.1 L500.2 700.0 L503.3 699.6 L506.5 698.2 L509.6 700.0 L512.7 699.8 L515.9 698.2 L519.0 698.9 L522.1 698.2 L525.3 700.8 L528.4 700.3 L531.5 700.6 L534.7 700.5 L537.8 700.0 L541.0 697.5 L544.1 700.6 L547.2 699.6 L550.4 698.7 L553.5 699.2 L556.6 699.5 L559.8 699.9 L562.9 701.2 L566.0 699.5 L569.2 700.2 L572.3 700.3 L575.4 699.1 L578.6 701.2 L581.7 698.5 L584.9 701.4 L588.0 701.1 L591.1 698.8 L594.3 697.9 L597.4 700.4 L600.5 702.6 L603.7 702.6 L606.8 700.0 L609.9 703.6 L613.1 701.8 L616.2 701.4 L619.3 701.4 L622.5 704.0 L625.6 702.8 L628.8 701.7 L631.9 701.3 L635.0 704.5 L638.2 704.0 L641.3 704.1 L644.4 705.0 L647.6 700.5 L650.7 704.2 L653.8 702.3 L657.0 702.2 L660.1 704.8 L663.2 706.0 L666.4 701.6 L669.5 703.8 L672.7 705.0 L675.8 703.0 L678.9 706.5 L682.1 702.9 L685.2 702.2 L720 702.2 L720 709.5 Z" fill="#eceef4"/>
<rect x="10" y="704.5" width="710" height="5" fill="#f2f4f8"/>
<rect x="10" y="709.5" width="748" height="13.5" fill="#d9d9d9"/>
<rect x="10" y="723.6" width="748" height="1.4" fill="#111"/>
<rect x="9.8" y="692.3" width="4" height="15.5" rx="2" fill="#fff" stroke="#666" stroke-width="1"/>
<rect x="10.2" y="694" width="1.3" height="12" fill="#111"/>
<rect x="754.0" y="692.3" width="4.5" height="15.5" rx="2" fill="#fff" stroke="#777" stroke-width="1"/>
<rect x="756.2" y="694" width="1.3" height="12" fill="#111"/>
<rect x="379" y="713.5" width="1" height="6" fill="#555"/>
<rect x="381" y="713.5" width="1" height="6" fill="#555"/>
<rect x="383" y="713.5" width="1" height="6" fill="#555"/>
<rect x="385" y="713.5" width="1" height="6" fill="#555"/>
<rect x="387" y="713.5" width="1" height="6" fill="#555"/>
<path d="M105 456 L681 653.5" stroke="#d8304a" stroke-width="1.8"/>
<path d="M677 657 L680 647 L688.5 655 Z" fill="#e02020"/>
<ellipse cx="741.3" cy="587.4" rx="29.5" ry="10.7" fill="none" stroke="#5fae84" stroke-width="1.3"/>
<rect x="116.5" y="623" width="106.3" height="27.2" fill="none" stroke="#8c8cd4" stroke-width="1.6"/>
</svg><svg id="t" width="775" height="731" viewBox="0 0 775 731"><defs><clipPath id="cx1"><rect x="10" y="300" width="718" height="25"/></clipPath><clipPath id="cx2"><rect x="11.2" y="668" width="712" height="25"/></clipPath></defs>
<text x="11" y="18" text-anchor="start" font-family='"Liberation Sans", sans-serif' font-size="11" font-weight="bold" fill="#151515" textLength="55.5" lengthAdjust="spacingAndGlyphs" stroke="#151515" stroke-width="0.35">12:30pm</text>
<text x="100.6" y="18" text-anchor="start" font-family='"Liberation Sans", sans-serif' font-size="11" font-weight="bold" fill="#151515" textLength="26" lengthAdjust="spacingAndGlyphs" stroke="#151515" stroke-width="0.35">GBP</text>
<text x="210.6" y="18" text-anchor="start" font-family='"Liberation Sans", sans-serif' font-size="11" font-weight="bold" fill="#151515" textLength="198" lengthAdjust="spacingAndGlyphs" stroke="#151515" stroke-width="0.35">Manufacturing Production m/m</text>
<text x="647.6" y="18" text-anchor="start" font-family='"Liberation Sans", sans-serif' font-size="11" font-weight="bold" fill="#151515" textLength="33.5" lengthAdjust="spacingAndGlyphs" stroke="#151515" stroke-width="0.35">0.3%</text>
<text x="716.8" y="18" text-anchor="start" font-family='"Liberation Sans", sans-serif' font-size="11" font-weight="bold" fill="#151515" textLength="33.5" lengthAdjust="spacingAndGlyphs" stroke="#151515" stroke-width="0.35">0.1%</text>
<text x="100.4" y="386" text-anchor="start" font-family='"Liberation Sans", sans-serif' font-size="11" font-weight="bold" fill="#151515" textLength="26" lengthAdjust="spacingAndGlyphs" stroke="#151515" stroke-width="0.35">GBP</text>
<text x="209.8" y="386" text-anchor="start" font-family='"Liberation Sans", sans-serif' font-size="11" font-weight="bold" fill="#151515" textLength="132.5" lengthAdjust="spacingAndGlyphs" stroke="#151515" stroke-width="0.35">Goods Trade Balance</text>
<text x="642.8" y="386" text-anchor="start" font-family='"Liberation Sans", sans-serif' font-size="11" font-weight="bold" fill="#151515" textLength="42.5" lengthAdjust="spacingAndGlyphs" stroke="#151515" stroke-width="0.35">-11.0B</text>
<text x="712.2" y="386" text-anchor="start" font-family='"Liberation Sans", sans-serif' font-size="11" font-weight="bold" fill="#151515" textLength="42.8" lengthAdjust="spacingAndGlyphs" stroke="#151515" stroke-width="0.35">-10.8B</text>
<text x="18.5" y="51.0" text-anchor="start" font-family='"Liberation Sans", sans-serif' font-size="11" font-weight="normal" fill="#e4e9f5" textLength="118.2" lengthAdjust="spacingAndGlyphs" stroke="#e4e9f5" stroke-width="0.35">Jan 2005 — Jul 2018</text>
<text x="408.5" y="51.0" text-anchor="start" font-family='"Liberation Sans", sans-serif' font-size="11" font-weight="bold" fill="#f2f5fb" textLength="34.5" lengthAdjust="spacingAndGlyphs">Range</text>
<text x="481.7" y="51.0" text-anchor="start" font-family='"Liberation Sans", sans-serif' font-size="11" font-weight="normal" fill="#dfe5f2" textLength="34.3" lengthAdjust="spacingAndGlyphs" stroke="#dfe5f2" stroke-width="0.35">Actual</text>
<text x="554.5" y="51.0" text-anchor="start" font-family='"Liberation Sans", sans-serif' font-size="11" font-weight="normal" fill="#dfe5f2" textLength="46.5" lengthAdjust="spacingAndGlyphs" stroke="#dfe5f2" stroke-width="0.35">Forecast</text>
<text x="638.7" y="51.0" text-anchor="start" font-family='"Liberation Sans", sans-serif' font-size="11" font-weight="normal" fill="#dfe5f2" textLength="47" lengthAdjust="spacingAndGlyphs" stroke="#dfe5f2" stroke-width="0.35">Revision</text>
<text x="18.5" y="418.8" text-anchor="start" font-family='"Liberation Sans", sans-serif' font-size="11" font-weight="normal" fill="#e4e9f5" textLength="124.5" lengthAdjust="spacingAndGlyphs" stroke="#e4e9f5" stroke-width="0.35">Jan 2000 — Nov 2018</text>
<text x="408.5" y="418.8" text-anchor="start" font-family='"Liberation Sans", sans-serif' font-size="11" font-weight="bold" fill="#f2f5fb" textLength="34.5" lengthAdjust="spacingAndGlyphs">Range</text>
<text x="481.7" y="418.8" text-anchor="start" font-family='"Liberation Sans", sans-serif' font-size="11" font-weight="normal" fill="#dfe5f2" textLength="34.3" lengthAdjust="spacingAndGlyphs" stroke="#dfe5f2" stroke-width="0.35">Actual</text>
<text x="554.5" y="418.8" text-anchor="start" font-family='"Liberation Sans", sans-serif' font-size="11" font-weight="normal" fill="#dfe5f2" textLength="46.5" lengthAdjust="spacingAndGlyphs" stroke="#dfe5f2" stroke-width="0.35">Forecast</text>
<text x="638.7" y="418.8" text-anchor="start" font-family='"Liberation Sans", sans-serif' font-size="11" font-weight="normal" fill="#dfe5f2" textLength="47" lengthAdjust="spacingAndGlyphs" stroke="#dfe5f2" stroke-width="0.35">Revision</text>
<text x="14.5" y="300.2" text-anchor="start" font-family='"Liberation Sans", sans-serif' font-size="11" font-weight="normal" fill="#a6a6a6" textLength="91" lengthAdjust="spacingAndGlyphs">© Forex Factory</text>
<text x="732.4" y="170" text-anchor="start" font-family='"Liberation Sans", sans-serif' font-size="11" font-weight="normal" fill="#4a6288" textLength="16" lengthAdjust="spacingAndGlyphs">0.1</text>
<text x="732.2" y="81.8" text-anchor="start" font-family='"Liberation Sans", sans-serif' font-size="11" font-weight="normal" fill="#111" textLength="16.3" lengthAdjust="spacingAndGlyphs" stroke="#111" stroke-width="0.3">3.0</text>
<text x="732.2" y="112.0" text-anchor="start" font-family='"Liberation Sans", sans-serif' font-size="11" font-weight="normal" fill="#111" textLength="16.3" lengthAdjust="spacingAndGlyphs" stroke="#111" stroke-width="0.3">2.0</text>
<text x="732.2" y="142.2" text-anchor="start" font-family='"Liberation Sans", sans-serif' font-size="11" font-weight="normal" fill="#111" textLength="16.3" lengthAdjust="spacingAndGlyphs" stroke="#111" stroke-width="0.3">1.0</text>
<text x="732.2" y="202.8" text-anchor="start" font-family='"Liberation Sans", sans-serif' font-size="11" font-weight="normal" fill="#111" textLength="21.2" lengthAdjust="spacingAndGlyphs" stroke="#111" stroke-width="0.3">-1.0</text>
<text x="732.2" y="233.0" text-anchor="start" font-family='"Liberation Sans", sans-serif' font-size="11" font-weight="normal" fill="#111" textLength="21.2" lengthAdjust="spacingAndGlyphs" stroke="#111" stroke-width="0.3">-2.0</text>
<text x="732.2" y="263.2" text-anchor="start" font-family='"Liberation Sans", sans-serif' font-size="11" font-weight="normal" fill="#111" textLength="21.2" lengthAdjust="spacingAndGlyphs" stroke="#111" stroke-width="0.3">-3.0</text>
<text x="732.2" y="293.5" text-anchor="start" font-family='"Liberation Sans", sans-serif' font-size="11" font-weight="normal" fill="#111" textLength="21.2" lengthAdjust="spacingAndGlyphs" stroke="#111" stroke-width="0.3">-4.0</text>
<text x="-2.1" y="317" text-anchor="start" font-family='"Liberation Sans", sans-serif' font-size="11" font-weight="normal" fill="#111" textLength="27.6" lengthAdjust="spacingAndGlyphs" clip-path="url(#cx1)" stroke="#111" stroke-width="0.3">2005</text>
<text x="50.8" y="317" text-anchor="start" font-family='"Liberation Sans", sans-serif' font-size="11" font-weight="normal" fill="#111" textLength="27.6" lengthAdjust="spacingAndGlyphs" clip-path="url(#cx1)" stroke="#111" stroke-width="0.3">2006</text>
<text x="103.7" y="317" text-anchor="start" font-family='"Liberation Sans", sans-serif' font-size="11" font-weight="normal" fill="#111" textLength="27.6" lengthAdjust="spacingAndGlyphs" clip-path="url(#cx1)" stroke="#111" stroke-width="0.3">2007</text>
<text x="156.5" y="317" text-anchor="start" font-family='"Liberation Sans", sans-serif' font-size="11" font-weight="normal" fill="#111" textLength="27.6" lengthAdjust="spacingAndGlyphs" clip-path="url(#cx1)" stroke="#111" stroke-width="0.3">2008</text>
<text x="209.3" y="317" text-anchor="start" font-family='"Liberation Sans", sans-serif' font-size="11" font-weight="normal" fill="#111" textLength="27.6" lengthAdjust="spacingAndGlyphs" clip-path="url(#cx1)" stroke="#111" stroke-width="0.3">2009</text>
<text x="262.2" y="317" text-anchor="start" font-family='"Liberation Sans", sans-serif' font-size="11" font-weight="normal" fill="#111" textLength="27.6" lengthAdjust="spacingAndGlyphs" clip-path="url(#cx1)" stroke="#111" stroke-width="0.3">2010</text>
<text x="315.1" y="317" text-anchor="start" font-family='"Liberation Sans", sans-serif' font-size="11" font-weight="normal" fill="#111" textLength="27.6" lengthAdjust="spacingAndGlyphs" clip-path="url(#cx1)" stroke="#111" stroke-width="0.3">2011</text>
<text x="367.9" y="317" text-anchor="start" font-family='"Liberation Sans", sans-serif' font-size="11" font-weight="normal" fill="#111" textLength="27.6" lengthAdjust="spacingAndGlyphs" clip-path="url(#cx1)" stroke="#111" stroke-width="0.3">2012</text>
<text x="420.8" y="317" text-anchor="start" font-family='"Liberation Sans", sans-serif' font-size="11" font-weight="normal" fill="#111" textLength="27.6" lengthAdjust="spacingAndGlyphs" clip-path="url(#cx1)" stroke="#111" stroke-width="0.3">2013</text>
<text x="473.6" y="317" text-anchor="start" font-family='"Liberation Sans", sans-serif' font-size="11" font-weight="normal" fill="#111" textLength="27.6" lengthAdjust="spacingAndGlyphs" clip-path="url(#cx1)" stroke="#111" stroke-width="0.3">2014</text>
<text x="526.5" y="317" text-anchor="start" font-family='"Liberation Sans", sans-serif' font-size="11" font-weight="normal" fill="#111" textLength="27.6" lengthAdjust="spacingAndGlyphs" clip-path="url(#cx1)" stroke="#111" stroke-width="0.3">2015</text>
<text x="579.3" y="317" text-anchor="start" font-family='"Liberation Sans", sans-serif' font-size="11" font-weight="normal" fill="#111" textLength="27.6" lengthAdjust="spacingAndGlyphs" clip-path="url(#cx1)" stroke="#111" stroke-width="0.3">2016</text>
<text x="632.2" y="317" text-anchor="start" font-family='"Liberation Sans", sans-serif' font-size="11" font-weight="normal" fill="#111" textLength="27.6" lengthAdjust="spacingAndGlyphs" clip-path="url(#cx1)" stroke="#111" stroke-width="0.3">2017</text>
<text x="685.0" y="317" text-anchor="start" font-family='"Liberation Sans", sans-serif' font-size="11" font-weight="normal" fill="#111" textLength="27.6" lengthAdjust="spacingAndGlyphs" clip-path="url(#cx1)" stroke="#111" stroke-width="0.3">2018</text>
<text x="14.5" y="668.2" text-anchor="start" font-family='"Liberation Sans", sans-serif' font-size="11" font-weight="normal" fill="#a6a6a6" textLength="91" lengthAdjust="spacingAndGlyphs">© Forex Factory</text>
<text x="726.4" y="603" text-anchor="start" font-family='"Liberation Sans", sans-serif' font-size="11" font-weight="normal" fill="#4a6288" textLength="29" lengthAdjust="spacingAndGlyphs">-10.8</text>
<text x="726.4" y="449.1" text-anchor="start" font-family='"Liberation Sans", sans-serif' font-size="11" font-weight="normal" fill="#111" textLength="21.2" lengthAdjust="spacingAndGlyphs" stroke="#111" stroke-width="0.3">-2.0</text>
<text x="726.4" y="484.0" text-anchor="start" font-family='"Liberation Sans", sans-serif' font-size="11" font-weight="normal" fill="#111" textLength="21.2" lengthAdjust="spacingAndGlyphs" stroke="#111" stroke-width="0.3">-4.0</text>
<text x="726.4" y="519.0" text-anchor="start" font-family='"Liberation Sans", sans-serif' font-size="11" font-weight="normal" fill="#111" textLength="21.2" lengthAdjust="spacingAndGlyphs" stroke="#111" stroke-width="0.3">-6.0</text>
<text x="726.4" y="553.9" text-anchor="start" font-family='"Liberation Sans", sans-serif' font-size="11" font-weight="normal" fill="#111" textLength="21.2" lengthAdjust="spacingAndGlyphs" stroke="#111" stroke-width="0.3">-8.0</text>
<text x="726.4" y="588.9" text-anchor="start" font-family='"Liberation Sans", sans-serif' font-size="11" font-weight="normal" fill="#111" textLength="28.4" lengthAdjust="spacingAndGlyphs" stroke="#111" stroke-width="0.3">-10.0</text>
<text x="726.4" y="623.9" text-anchor="start" font-family='"Liberation Sans", sans-serif' font-size="11" font-weight="normal" fill="#111" textLength="28.4" lengthAdjust="spacingAndGlyphs" stroke="#111" stroke-width="0.3">-12.0</text>
<text x="726.4" y="658.8" text-anchor="start" font-family='"Liberation Sans", sans-serif' font-size="11" font-weight="normal" fill="#111" textLength="28.4" lengthAdjust="spacingAndGlyphs" stroke="#111" stroke-width="0.3">-14.0</text>
<text x="-2.4" y="685" text-anchor="start" font-family='"Liberation Sans", sans-serif' font-size="11" font-weight="normal" fill="#111" textLength="27.6" lengthAdjust="spacingAndGlyphs" clip-path="url(#cx2)" stroke="#111" stroke-width="0.3">2000</text>
<text x="72.9" y="685" text-anchor="start" font-family='"Liberation Sans", sans-serif' font-size="11" font-weight="normal" fill="#111" textLength="27.6" lengthAdjust="spacingAndGlyphs" clip-path="url(#cx2)" stroke="#111" stroke-width="0.3">2002</text>
<text x="148.2" y="685" text-anchor="start" font-family='"Liberation Sans", sans-serif' font-size="11" font-weight="normal" fill="#111" textLength="27.6" lengthAdjust="spacingAndGlyphs" clip-path="url(#cx2)" stroke="#111" stroke-width="0.3">2004</text>
<text x="223.5" y="685" text-anchor="start" font-family='"Liberation Sans", sans-serif' font-size="11" font-weight="normal" fill="#111" textLength="27.6" lengthAdjust="spacingAndGlyphs" clip-path="url(#cx2)" stroke="#111" stroke-width="0.3">2006</text>
<text x="298.8" y="685" text-anchor="start" font-family='"Liberation Sans", sans-serif' font-size="11" font-weight="normal" fill="#111" textLength="27.6" lengthAdjust="spacingAndGlyphs" clip-path="url(#cx2)" stroke="#111" stroke-width="0.3">2008</text>
<text x="374.1" y="685" text-anchor="start" font-family='"Liberation Sans", sans-serif' font-size="11" font-weight="normal" fill="#111" textLength="27.6" lengthAdjust="spacingAndGlyphs" clip-path="url(#cx2)" stroke="#111" stroke-width="0.3">2010</text>
<text x="449.4" y="685" text-anchor="start" font-family='"Liberation Sans", sans-serif' font-size="11" font-weight="normal" fill="#111" textLength="27.6" lengthAdjust="spacingAndGlyphs" clip-path="url(#cx2)" stroke="#111" stroke-width="0.3">2012</text>
<text x="524.7" y="685" text-anchor="start" font-family='"Liberation Sans", sans-serif' font-size="11" font-weight="normal" fill="#111" textLength="27.6" lengthAdjust="spacingAndGlyphs" clip-path="url(#cx2)" stroke="#111" stroke-width="0.3">2014</text>
<text x="600.0" y="685" text-anchor="start" font-family='"Liberation Sans", sans-serif' font-size="11" font-weight="normal" fill="#111" textLength="27.6" lengthAdjust="spacingAndGlyphs" clip-path="url(#cx2)" stroke="#111" stroke-width="0.3">2016</text>
<text x="675.3" y="685" text-anchor="start" font-family='"Liberation Sans", sans-serif' font-size="11" font-weight="normal" fill="#111" textLength="27.6" lengthAdjust="spacingAndGlyphs" clip-path="url(#cx2)" stroke="#111" stroke-width="0.3">2018</text>
<text x="128.2" y="643.4" text-anchor="start" font-family='"Liberation Sans", sans-serif' font-size="16" font-weight="bold" fill="#111" textLength="86.5" lengthAdjust="spacingAndGlyphs">Рисунок 6.</text>
</svg></body></html>
